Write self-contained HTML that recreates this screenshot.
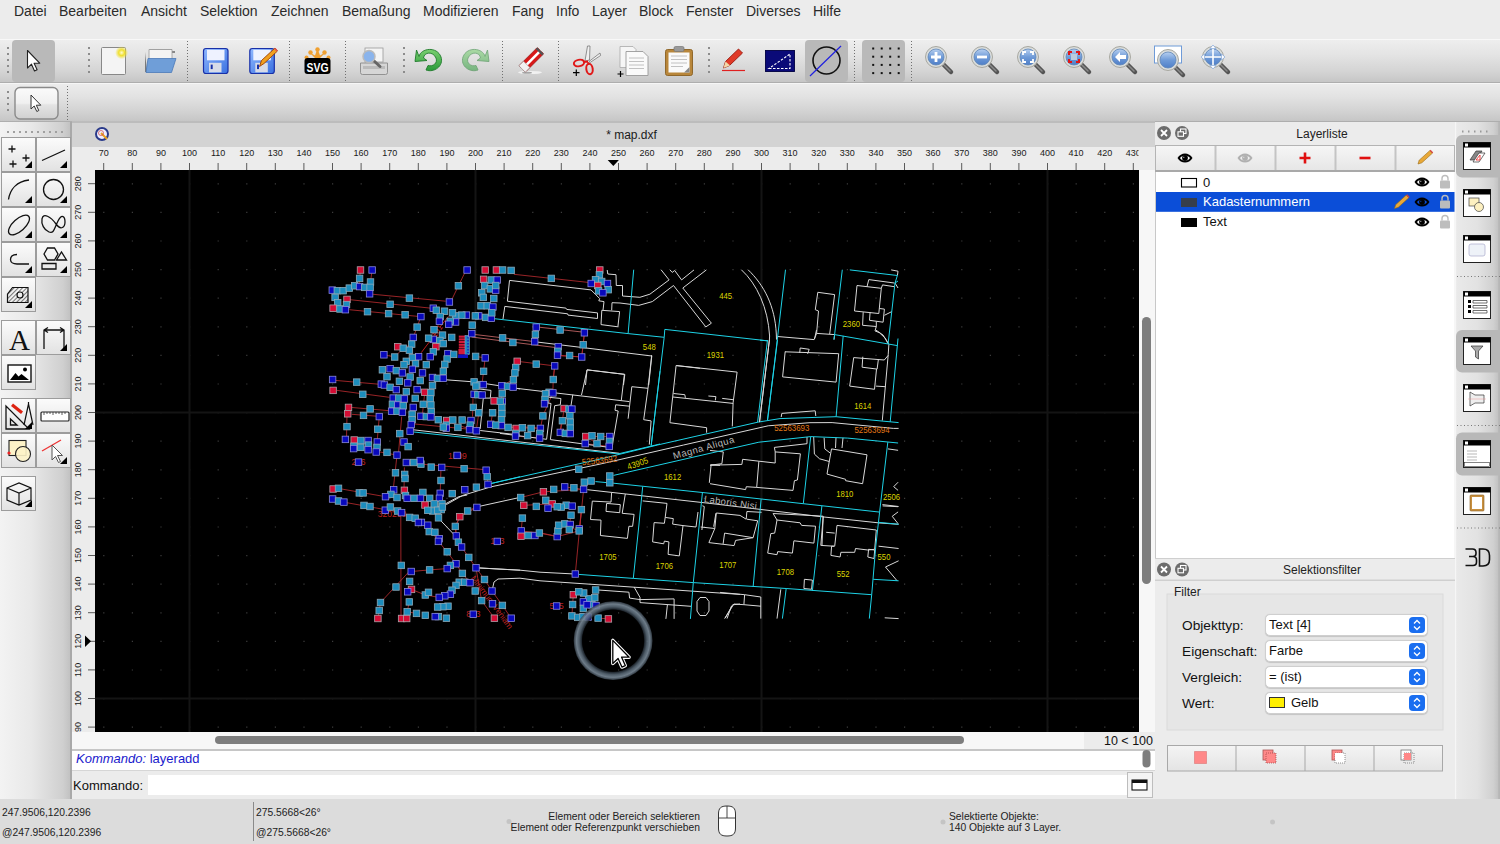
<!DOCTYPE html><html><head><meta charset="utf-8"><style>*{box-sizing:border-box;margin:0;padding:0}
html,body{width:1500px;height:844px;overflow:hidden;background:#ececec;font-family:"Liberation Sans",sans-serif;color:#222}
.a{position:absolute}
svg{position:absolute;overflow:visible}
#menubar{left:0;top:0;width:1500px;height:39px;background:#ececec}
#menubar span{position:absolute;top:3px;font-size:14px;color:#2a2a2a}
#tb1{left:0;top:39px;width:1500px;height:44px;background:linear-gradient(#eeeeee,#e4e4e4 35%,#d4d4d4 75%,#c6c6c6);border-top:1px solid #f8f8f8;border-bottom:1.5px solid #aeaeae}
#tb2{left:0;top:83px;width:1500px;height:39px;background:linear-gradient(#ececec,#e2e2e2 35%,#d2d2d2 75%,#c6c6c6);border-top:1.5px solid #f6f6f6;border-bottom:1.5px solid #aeaeae}
.hd{position:absolute;width:2px;background:repeating-linear-gradient(#8e8e8e 0 2px,transparent 2px 6px)}
.vs{position:absolute;width:1px;background:repeating-linear-gradient(#6c6c6c 0 1px,transparent 1px 3px)}
.selbtn{position:absolute;background:#b9b9b9;border-radius:4px}
#left{left:0;top:122px;width:72px;height:677px;background:linear-gradient(90deg,#f3f3f3 0,#e8e8e8 45%,#cfcfcf 90%,#c2c2c2 100%);border-right:2px solid #a9a9a9}
.tbtn{position:absolute;width:35px;height:35px;background:linear-gradient(#fbfbfb,#efefef 50%,#e2e2e2);border:1px solid #9c9c9c}
.tbtn svg{left:0;top:0}
.tri{position:absolute;right:3px;bottom:3px;width:0;height:0;border-left:7px solid transparent;border-bottom:7px solid #000}
#dtitle{left:72px;top:121px;width:1083px;height:26px;background:#d3d3d3;border-top:2px solid #bcbcbc}
#rulerT{left:72px;top:147px;width:1083px;height:23px;background:#ececec}
#rulerL{left:72px;top:147px;width:23px;height:585px;background:#ececec}
.rl{position:absolute;font-size:9px;color:#1a1a1a;width:30px;text-align:center;line-height:10px}
#canvas{left:95px;top:170px;width:1044px;height:562px;background:#000;overflow:hidden}
#vscroll{left:1139px;top:170px;width:16px;height:562px;background:#f7f7f7}
#hscroll{left:72px;top:732px;width:1083px;height:17px;background:#f7f7f7}
#cmdhist{left:72px;top:749px;width:1083px;height:22px;background:#fff;border-top:2px solid #c6c6c6;border-bottom:1px solid #d6d6d6}
#cmdin{left:72px;top:771px;width:1083px;height:28px;background:#ececec}
#status{left:0;top:799px;width:1500px;height:45px;background:#dcdcdc}
.st{position:absolute;font-size:10.3px;color:#222;white-space:nowrap;line-height:13px}
#rpanel{left:1155px;top:122px;width:300px;height:677px;background:#ececec}
#rdock{left:1455px;top:122px;width:45px;height:677px;background:linear-gradient(90deg,#eaeaea,#e2e2e2 50%,#d0d0d0 85%,#bdbdbd)}
.di{position:absolute;left:8px;width:28px;height:28px;background:#fff;border:1px solid #222;border-top:6px solid #000}
.di:before{content:"";position:absolute;left:1px;top:-5px;width:4px;height:4px;background:#fff}
.di svg{left:0;top:0}
.combo{position:absolute;left:1265px;width:163px;height:22px;background:#fff;border:1px solid #cfcfcf;border-radius:5px;font-size:13px;padding-left:3px;line-height:20px;color:#111;box-shadow:0 0.5px 1px rgba(0,0,0,0.15)}
.combo .arr{position:absolute;right:2px;top:2px;width:16px;height:16px;background:#1a6ef0;border-radius:4px}
.lbl{position:absolute;left:1182px;font-size:13.7px;color:#111;line-height:15px}
.ph{position:absolute;font-size:12px;color:#222}
.circ{position:absolute;width:14px;height:14px;border-radius:50%;background:#6e6e6e}
</style></head><body><div id="menubar" class="a"><span style="left:14px">Datei</span><span style="left:59px">Bearbeiten</span><span style="left:141px">Ansicht</span><span style="left:200px">Selektion</span><span style="left:271px">Zeichnen</span><span style="left:342px">Bemaßung</span><span style="left:423px">Modifizieren</span><span style="left:512px">Fang</span><span style="left:556px">Info</span><span style="left:592px">Layer</span><span style="left:639px">Block</span><span style="left:686px">Fenster</span><span style="left:746px">Diverses</span><span style="left:813px">Hilfe</span></div><div id="tb1" class="a"></div><div id="tb2" class="a"></div><svg style="left:0;top:0" width="1500" height="122"><defs><linearGradient id="lensg" x1="0" y1="0" x2="0" y2="1"><stop offset="0" stop-color="#b8d0f0"/><stop offset="0.5" stop-color="#6f9bd8"/><stop offset="1" stop-color="#4f7fc8"/></linearGradient><linearGradient id="flop" x1="0" y1="0" x2="1" y2="1"><stop offset="0" stop-color="#8fb8ff"/><stop offset="1" stop-color="#3a70e0"/></linearGradient><radialGradient id="glow"><stop offset="0" stop-color="#fffbd0"/><stop offset="0.45" stop-color="#f0e030"/><stop offset="1" stop-color="#f0e030" stop-opacity="0"/></radialGradient><linearGradient id="undog" x1="0" y1="0" x2="0" y2="1"><stop offset="0" stop-color="#7ad070"/><stop offset="1" stop-color="#2a9a3a"/></linearGradient></defs><path d="M8 47v2M8 53v2M8 59v2M8 65v2M8 71v2" stroke="#8c8c8c" stroke-width="2"/><path d="M89 47v2M89 53v2M89 59v2M89 65v2M89 71v2" stroke="#8c8c8c" stroke-width="2"/><path d="M404 47v2M404 53v2M404 59v2M404 65v2M404 71v2" stroke="#8c8c8c" stroke-width="2"/><path d="M709 47v2M709 53v2M709 59v2M709 65v2M709 71v2" stroke="#8c8c8c" stroke-width="2"/><path d="M187.5 41V81" stroke="#707070" stroke-width="1" stroke-dasharray="1 2"/><path d="M289.5 41V81" stroke="#707070" stroke-width="1" stroke-dasharray="1 2"/><path d="M345.5 41V81" stroke="#707070" stroke-width="1" stroke-dasharray="1 2"/><path d="M502.5 41V81" stroke="#707070" stroke-width="1" stroke-dasharray="1 2"/><path d="M558.5 41V81" stroke="#707070" stroke-width="1" stroke-dasharray="1 2"/><path d="M854.5 41V81" stroke="#707070" stroke-width="1" stroke-dasharray="1 2"/><path d="M911.5 41V81" stroke="#707070" stroke-width="1" stroke-dasharray="1 2"/><rect x="12" y="40" width="43" height="42" rx="4" fill="#b9b9b9"/><rect x="805" y="40" width="43" height="42" rx="4" fill="#b9b9b9"/><rect x="862" y="40" width="43" height="42" rx="4" fill="#b9b9b9"/><path d="M27.5 50.5V68l4-3.8 3 6.8 2.6-1.2-3-6.6h5.6z" fill="#fff" stroke="#222" stroke-width="1.1" stroke-linejoin="round"/><rect x="101.5" y="47.5" width="24" height="27" rx="1" fill="#f4f4f4" stroke="#888" stroke-width="1"/><circle cx="121.6" cy="52.7" r="6.5" fill="url(#glow)"/><path d="M145 51h4l1-2h22v4h3v-2H150z" fill="#888"/><path d="M149 49.5h23v11H149z" fill="#f3f3f3" stroke="#999" stroke-width="0.8"/><path d="M145 52v20h2z" fill="#7a7a7a"/><path d="M148 58.5h28l-4.5 14H146z" fill="#6f9ed8" stroke="#4a78b8" stroke-width="0.8"/><rect x="203.5" y="48.5" width="24.5" height="25" rx="2.5" fill="url(#flop)" stroke="#1830a8" stroke-width="1.2"/><rect x="207.0" y="49.8" width="17.5" height="10.5" fill="#eef2ff"/><rect x="209.0" y="62.8" width="12.5" height="9.5" fill="#d8dce8"/><rect x="210.7" y="64.6" width="2" height="4.5" fill="#1830a8"/><rect x="249.8" y="48.5" width="24.5" height="25" rx="2.5" fill="url(#flop)" stroke="#1830a8" stroke-width="1.2"/><rect x="253.3" y="49.8" width="17.5" height="10.5" fill="#eef2ff"/><rect x="255.3" y="62.8" width="12.5" height="9.5" fill="#d8dce8"/><rect x="257.0" y="64.6" width="2" height="4.5" fill="#1830a8"/><path d="M259.5 66.5l2-6 13.5-12.5 2.5 3-13.5 12.5z" fill="#f0a020" stroke="#a04000" stroke-width="0.9"/><path d="M274 48.8l2.5 3 1-1.5-2-2.2z" fill="#e05050"/><path d="M317.5 60.5L309 52l6 3.5 2.5-7 2.5 7 6-3.5z" fill="#f0a030"/><circle cx="310.5" cy="52.5" r="2.2" fill="#f0a030"/><circle cx="317.5" cy="49.5" r="2.2" fill="#f0a030"/><circle cx="324.5" cy="52.5" r="2.2" fill="#f0a030"/><circle cx="306.5" cy="57.5" r="2" fill="#f0a030"/><circle cx="328.5" cy="57.5" r="2" fill="#f0a030"/><rect x="304.5" y="58" width="26" height="16" rx="3" fill="#000"/><text x="317.5" y="71.5" font-family="Liberation Sans" font-weight="bold" font-size="12" text-anchor="middle" fill="#fff" textLength="22" lengthAdjust="spacingAndGlyphs">SVG</text><rect x="365" y="48" width="18" height="14" fill="#f4f4f4" stroke="#999" stroke-width="0.8"/><path d="M360.5 63h27v9.5a2 2 0 0 1-2 2h-23a2 2 0 0 1-2-2z" fill="#d6d6d6" stroke="#8a8a8a" stroke-width="0.9"/><rect x="363" y="66" width="22" height="3" fill="#bbb"/><path d="M373 60l7 6.5" stroke="#666" stroke-width="3" stroke-linecap="round"/><circle cx="369" cy="56.5" r="6" fill="#8ab4ec" stroke="#bbb" stroke-width="1.5"/><path d="M419 56.5 C421 48 437 46 441 57 C444 66 434 73 426 70 L428 65.5 C433 67 438 63 436 58 C433 51 424 52 423.5 58 L427 60.5 L415 61.5 L416.5 50z" fill="url(#undog)" stroke="#1e7a2a" stroke-width="0.9"/><g opacity="0.55" transform="translate(904 0) scale(-1 1)"><path d="M419 56.5 C421 48 437 46 441 57 C444 66 434 73 426 70 L428 65.5 C433 67 438 63 436 58 C433 51 424 52 423.5 58 L427 60.5 L415 61.5 L416.5 50z" fill="url(#undog)" stroke="#1e7a2a" stroke-width="0.9"/></g><ellipse cx="530" cy="72.5" rx="12" ry="1.6" fill="#f4f4f4" opacity="0.9"/><ellipse cx="527" cy="72.8" rx="5" ry="1" fill="#777" opacity="0.6"/><g transform="rotate(-45 531.3 59.8)"><rect x="518.3" y="55.3" width="26" height="9" rx="1" fill="#d81818" stroke="#8a1010" stroke-width="0.6"/><rect x="518.3" y="58.6" width="26" height="2.6" fill="#fff"/><rect x="518.3" y="55.3" width="6.5" height="9" fill="#f2f2f2" stroke="#999" stroke-width="0.6"/><rect x="542" y="55.3" width="2.3" height="9" fill="#555"/></g><path d="M585 61L587.5 46h2.5l-0.5 14z" fill="#f0f0f0" stroke="#777" stroke-width="0.8"/><path d="M589 61.5L600 53l0.6 2.5-10.5 7z" fill="#f0f0f0" stroke="#777" stroke-width="0.8"/><ellipse cx="579" cy="63" rx="5.2" ry="3.2" transform="rotate(-12 579 63)" fill="none" stroke="#e01818" stroke-width="2"/><ellipse cx="589.5" cy="69" rx="3.2" ry="5.2" transform="rotate(-8 589.5 69)" fill="none" stroke="#e01818" stroke-width="2"/><path d="M583.5 62l4.5-0.5M588 62.5l1 2" stroke="#e01818" stroke-width="1.8"/><path d="M573 72.7h6.5M576.3 69.5v6.5" stroke="#000" stroke-width="1.2"/><path d="M620 46.5h13l3 3v18h-16z" fill="#f6f6f6" stroke="#aaa" stroke-width="0.8"/><path d="M626 51.5h17l5 5v19h-22z" fill="#fafafa" stroke="#999" stroke-width="0.9"/><path d="M629 58h15M629 61.5h15M629 65h15M629 68.5h15" stroke="#bbb" stroke-width="0.9"/><path d="M617.5 74h6M620.5 71v6" stroke="#000" stroke-width="1.2"/><rect x="665.5" y="49.5" width="27" height="26" rx="2" fill="#b8863a" stroke="#8a6020" stroke-width="0.9"/><rect x="668.5" y="52.5" width="21" height="20" fill="#fafafa"/><path d="M671 56h16M671 59.5h16M671 63h16M671 66.5h12" stroke="#bbb" stroke-width="0.9"/><rect x="674" y="46.5" width="10" height="5" rx="1.5" fill="#999" stroke="#777" stroke-width="0.7"/><path d="M684 72.5l5.5-5.5v5.5z" fill="#888"/><path d="M722 70.5H745" stroke="#e02020" stroke-width="1.2"/><path d="M723.5 68l2-6.5 13-12.5 4 4-13 12.5z" fill="#e03a28" stroke="#9a1a10" stroke-width="0.9"/><path d="M723.5 68l2-6.5 4.5 4z" fill="#f2d9a8"/><rect x="765.5" y="50.5" width="29" height="21" fill="#0a0a78" stroke="#000040" stroke-width="0.9"/><path d="M769 68.5H790V54Z" fill="none" stroke="#fff" stroke-width="1.1" stroke-dasharray="2.5 1.5"/><circle cx="826.5" cy="60.5" r="13.5" fill="none" stroke="#111" stroke-width="1.6"/><path d="M810 76L841 46" stroke="#2020e0" stroke-width="1.2"/><rect x="872.2" y="47.5" width="2" height="2" fill="#111"/><rect x="872.2" y="55.7" width="2" height="2" fill="#111"/><rect x="872.2" y="63.9" width="2" height="2" fill="#111"/><rect x="872.2" y="72.1" width="2" height="2" fill="#111"/><rect x="880.7" y="47.5" width="2" height="2" fill="#111"/><rect x="880.7" y="55.7" width="2" height="2" fill="#111"/><rect x="880.7" y="63.9" width="2" height="2" fill="#111"/><rect x="880.7" y="72.1" width="2" height="2" fill="#111"/><rect x="889.2" y="47.5" width="2" height="2" fill="#111"/><rect x="889.2" y="55.7" width="2" height="2" fill="#111"/><rect x="889.2" y="63.9" width="2" height="2" fill="#111"/><rect x="889.2" y="72.1" width="2" height="2" fill="#111"/><rect x="897.7" y="47.5" width="2" height="2" fill="#111"/><rect x="897.7" y="55.7" width="2" height="2" fill="#111"/><rect x="897.7" y="63.9" width="2" height="2" fill="#111"/><rect x="897.7" y="72.1" width="2" height="2" fill="#111"/><path d="M942 63L951 72" stroke="#555" stroke-width="4.5" stroke-linecap="round"/><path d="M943 64L950 71" stroke="#8a8a8a" stroke-width="1.5" stroke-linecap="round"/><circle cx="936" cy="57" r="10.5" fill="#d9dcdc" stroke="#a8a8a0" stroke-width="1"/><circle cx="936" cy="57" r="8" fill="url(#lensg)" stroke="#5f86b8" stroke-width="0.8"/><path d="M936 52v10M931 57h10" stroke="#fff" stroke-width="2.8"/><path d="M988 63L997 72" stroke="#555" stroke-width="4.5" stroke-linecap="round"/><path d="M989 64L996 71" stroke="#8a8a8a" stroke-width="1.5" stroke-linecap="round"/><circle cx="982" cy="57" r="10.5" fill="#d9dcdc" stroke="#a8a8a0" stroke-width="1"/><circle cx="982" cy="57" r="8" fill="url(#lensg)" stroke="#5f86b8" stroke-width="0.8"/><path d="M977 57h10" stroke="#fff" stroke-width="2.8"/><path d="M1034 63L1043 72" stroke="#555" stroke-width="4.5" stroke-linecap="round"/><path d="M1035 64L1042 71" stroke="#8a8a8a" stroke-width="1.5" stroke-linecap="round"/><circle cx="1028" cy="57" r="10.5" fill="#d9dcdc" stroke="#a8a8a0" stroke-width="1"/><circle cx="1028" cy="57" r="8" fill="url(#lensg)" stroke="#5f86b8" stroke-width="0.8"/><path d="M1023 55v-3h3M1030 52h3v3M1033 59v3h-3M1026 62h-3v-3" stroke="#fff" stroke-width="1.8" fill="none"/><path d="M1080 63L1089 72" stroke="#555" stroke-width="4.5" stroke-linecap="round"/><path d="M1081 64L1088 71" stroke="#8a8a8a" stroke-width="1.5" stroke-linecap="round"/><circle cx="1074" cy="57" r="10.5" fill="#d9dcdc" stroke="#a8a8a0" stroke-width="1"/><circle cx="1074" cy="57" r="8" fill="url(#lensg)" stroke="#5f86b8" stroke-width="0.8"/><rect x="1071" y="54" width="6" height="6" fill="#bcd"/><path d="M1069 55v-3h3M1076 52h3v3M1079 59v3h-3M1072 62h-3v-3" stroke="#e01818" stroke-width="2" fill="none"/><path d="M1126 63L1135 72" stroke="#555" stroke-width="4.5" stroke-linecap="round"/><path d="M1127 64L1134 71" stroke="#8a8a8a" stroke-width="1.5" stroke-linecap="round"/><circle cx="1120" cy="57" r="10.5" fill="#d9dcdc" stroke="#a8a8a0" stroke-width="1"/><circle cx="1120" cy="57" r="8" fill="url(#lensg)" stroke="#5f86b8" stroke-width="0.8"/><path d="M1115 57l5-5v3h6v4h-6v3z" fill="#fff"/><rect x="1154.5" y="46" width="27" height="17" fill="#fff" stroke="#6f9bd8" stroke-width="1"/><path d="M1174 66L1183 75" stroke="#555" stroke-width="4.5" stroke-linecap="round"/><path d="M1175 67L1182 74" stroke="#8a8a8a" stroke-width="1.5" stroke-linecap="round"/><circle cx="1168" cy="60" r="10.5" fill="#d9dcdc" stroke="#a8a8a0" stroke-width="1"/><circle cx="1168" cy="60" r="8" fill="url(#lensg)" stroke="#5f86b8" stroke-width="0.8"/><path d="M1219 63L1228 72" stroke="#555" stroke-width="4.5" stroke-linecap="round"/><path d="M1220 64L1227 71" stroke="#8a8a8a" stroke-width="1.5" stroke-linecap="round"/><circle cx="1213" cy="57" r="10.5" fill="#d9dcdc" stroke="#a8a8a0" stroke-width="1"/><circle cx="1213" cy="57" r="8" fill="url(#lensg)" stroke="#5f86b8" stroke-width="0.8"/><path d="M1213 47v20M1203 57h20" stroke="#fff" stroke-width="1.6"/><path d="M1213 45l-3 3.5h6zM1213 69l-3-3.5h6zM1201 57l3.5-3v6zM1225 57l-3.5-3v6z" fill="#fff" stroke="#6f9bd8" stroke-width="0.6"/><path d="M8 91v2M8 97v2M8 103v2M8 109v2" stroke="#8c8c8c" stroke-width="2"/><path d="M67.5 86V120" stroke="#707070" stroke-width="1" stroke-dasharray="1 2"/><defs><linearGradient id="b2g" x1="0" y1="0" x2="0" y2="1"><stop offset="0" stop-color="#fbfbfb"/><stop offset="0.5" stop-color="#f0f0f0"/><stop offset="0.55" stop-color="#e4e4e4"/><stop offset="1" stop-color="#d0d0d0"/></linearGradient></defs><rect x="15" y="87.5" width="43" height="31.5" rx="5" fill="url(#b2g)" stroke="#8a8a8a" stroke-width="1.4"/><path d="M31 95V109l3.2-3 2.6 5.5 2-1-2.5-5.3h4.5z" fill="#fff" stroke="#333" stroke-width="1" stroke-linejoin="round"/></svg><div id="left" class="a"></div><div class="a" style="left:7px;top:131px;width:57px;height:2px;background:repeating-linear-gradient(90deg,#a0a0a0 0 2px,transparent 2px 6px)"></div><div class="tbtn" style="left:1px;top:137px"><svg width="35" height="35" viewBox="0 0 35 35"><path d="M6.5 11h7M10 7.5v7M20.5 20h7M24 16.5v7M7.5 26h7M11 22.5v7" fill="none" stroke="#111" stroke-width="1.3"/></svg><div class="tri"></div></div><div class="tbtn" style="left:36px;top:137px"><svg width="35" height="35" viewBox="0 0 35 35"><path d="M5 22.5L28 12" fill="none" stroke="#111" stroke-width="1.3"/></svg><div class="tri"></div></div><div class="tbtn" style="left:1px;top:172px"><svg width="35" height="35" viewBox="0 0 35 35"><path d="M6.5 26.5C8 16 15 8.5 27 7" fill="none" stroke="#111" stroke-width="1.3"/></svg><div class="tri"></div></div><div class="tbtn" style="left:36px;top:172px"><svg width="35" height="35" viewBox="0 0 35 35"><circle cx="16.5" cy="16.5" r="10" fill="none" stroke="#111" stroke-width="1.3"/></svg><div class="tri"></div></div><div class="tbtn" style="left:1px;top:207px"><svg width="35" height="35" viewBox="0 0 35 35"><ellipse cx="17" cy="17" rx="13" ry="6" transform="rotate(-42 17 17)" fill="none" stroke="#111" stroke-width="1.3"/></svg><div class="tri"></div></div><div class="tbtn" style="left:36px;top:207px"><svg width="35" height="35" viewBox="0 0 35 35"><path d="M5 11C6 4 14 9 19 16S28 19 28 14 25 5 21 13 17 26 12 24 4 16 5 11z" fill="none" stroke="#111" stroke-width="1.3"/></svg><div class="tri"></div></div><div class="tbtn" style="left:1px;top:242px"><svg width="35" height="35" viewBox="0 0 35 35"><path d="M15 11.5C10 11.5 8.5 14 8.5 16.5S11 21 15 21H27" fill="none" stroke="#111" stroke-width="1.3"/></svg><div class="tri"></div></div><div class="tbtn" style="left:36px;top:242px"><svg width="35" height="35" viewBox="0 0 35 35"><path d="M7 11L10.5 5H17.5L21 11L17.5 17H10.5Z M19.5 17L24.5 9L29.5 17Z M5 20.5H19V26H5Z" fill="none" stroke="#111" stroke-width="1.3" stroke-width="1.1"/></svg><div class="tri"></div></div><div class="tbtn" style="left:1px;top:277px"><svg width="35" height="35" viewBox="0 0 35 35"><defs><pattern id="hp" width="3" height="3" patternUnits="userSpaceOnUse" patternTransform="rotate(45)"><rect width="1" height="3" fill="#777"/></pattern></defs><path d="M5.5 16L10.5 9.5H26V24.5H5.5Z" fill="url(#hp)" stroke="#111" stroke-width="1.2"/><circle cx="18" cy="17" r="3" fill="#eee" stroke="#111" stroke-width="1.2"/></svg><div class="tri"></div></div><div class="tbtn" style="left:1px;top:320px"><svg width="35" height="35" viewBox="0 0 35 35"><text x="17.5" y="29" font-family="Liberation Serif" font-size="29" text-anchor="middle" fill="#111">A</text></svg></div><div class="tbtn" style="left:36px;top:320px"><svg width="35" height="35" viewBox="0 0 35 35"><path d="M7 28V8.5M27 28V8.5M7 9H27M7 9l4-2.5M7 9l4 2.5M27 9l-4-2.5M27 9l-4 2.5" fill="none" stroke="#111" stroke-width="1.3" stroke-width="1.5"/></svg><div class="tri"></div></div><div class="tbtn" style="left:1px;top:355px"><svg width="35" height="35" viewBox="0 0 35 35"><rect x="6" y="9" width="23" height="17" fill="#fff" stroke="#111" stroke-width="1.4"/><path d="M8 24l5.5-7 3 3.5 3-2.5L27 24Z" fill="#000"/><circle cx="23" cy="13.5" r="2" fill="#000"/></svg></div><div class="tbtn" style="left:1px;top:398px"><svg width="35" height="35" viewBox="0 0 35 35"><path d="M4 7V30H27Z M8.5 20V26H15Z" fill="none" stroke="#111" stroke-width="1.3"/><path d="M9 7l10 8 2-2.5-10-8z" fill="#d21"/><path d="M26.5 5L22 26M26.5 5L31 26M26.5 3v3" stroke="#111" stroke-width="1.2" fill="none"/></svg><div class="tri"></div></div><div class="tbtn" style="left:36px;top:398px"><svg width="35" height="35" viewBox="0 0 35 35"><rect x="4" y="13" width="28" height="9" rx="1" fill="#fff" stroke="#222" stroke-width="1.2"/><path d="M7 13v3M10 13v2M13 13v2M16 13v3M19 13v2M22 13v2M25 13v3M28 13v2" stroke="#333" stroke-width="0.8"/></svg></div><div class="tbtn" style="left:1px;top:433px"><svg width="35" height="35" viewBox="0 0 35 35"><rect x="7" y="6.5" width="17" height="15" fill="#fdf3c8" stroke="#222" stroke-width="1.1"/><circle cx="21" cy="20" r="7.5" fill="#fdf3c8" fill-opacity="0.9" stroke="#222" stroke-width="1.1"/><circle cx="7" cy="19" r="1.6" fill="#e22"/></svg></div><div class="tbtn" style="left:36px;top:433px"><svg width="35" height="35" viewBox="0 0 35 35"><path d="M5 17L24 6" stroke="#e33" stroke-width="1.3"/><path d="M15 11v15l3.5-3.5 3 6 2-1-3-6h5z" fill="#fff" stroke="#555" stroke-width="1"/></svg><div class="tri"></div></div><div class="tbtn" style="left:1px;top:476px"><svg width="35" height="35" viewBox="0 0 35 35"><path d="M5 11L17 6L29 11V23L17 28L5 23Z M5 11L17 16L29 11 M17 16V28" fill="none" stroke="#111" stroke-width="1.2"/></svg><div class="tri"></div></div><div id="dtitle" class="a"></div><div id="rulerT" class="a"></div><div id="rulerL" class="a"></div><div id="vscroll" class="a"></div><div id="hscroll" class="a"></div><div id="cmdhist" class="a"></div><div id="cmdin" class="a"></div><svg style="left:0;top:0" width="1500" height="844"><defs><radialGradient id="ring" cx="0.5" cy="0.5" r="0.5"><stop offset="0.78" stop-color="#000" stop-opacity="0"/><stop offset="0.8" stop-color="#2a3540"/><stop offset="0.9" stop-color="#6c7c8a"/><stop offset="1" stop-color="#2a3540"/></radialGradient></defs><circle cx="102" cy="134" r="6" fill="#eef" stroke="#2a3a8a" stroke-width="2"/><path d="M101 133l6 6" stroke="#e8a020" stroke-width="2"/><circle cx="101" cy="133" r="2.5" fill="none" stroke="#c44" stroke-width="0.7"/><text x="631.5" y="139" font-family="Liberation Sans" font-size="12" text-anchor="middle" fill="#1a1a1a">* map.dxf</text><text x="103.7" y="156" font-family="Liberation Sans" font-size="9" text-anchor="middle" fill="#1a1a1a">70</text><text x="132.3" y="156" font-family="Liberation Sans" font-size="9" text-anchor="middle" fill="#1a1a1a">80</text><text x="160.9" y="156" font-family="Liberation Sans" font-size="9" text-anchor="middle" fill="#1a1a1a">90</text><text x="189.5" y="156" font-family="Liberation Sans" font-size="9" text-anchor="middle" fill="#1a1a1a">100</text><text x="218.1" y="156" font-family="Liberation Sans" font-size="9" text-anchor="middle" fill="#1a1a1a">110</text><text x="246.7" y="156" font-family="Liberation Sans" font-size="9" text-anchor="middle" fill="#1a1a1a">120</text><text x="275.3" y="156" font-family="Liberation Sans" font-size="9" text-anchor="middle" fill="#1a1a1a">130</text><text x="303.9" y="156" font-family="Liberation Sans" font-size="9" text-anchor="middle" fill="#1a1a1a">140</text><text x="332.5" y="156" font-family="Liberation Sans" font-size="9" text-anchor="middle" fill="#1a1a1a">150</text><text x="361.1" y="156" font-family="Liberation Sans" font-size="9" text-anchor="middle" fill="#1a1a1a">160</text><text x="389.7" y="156" font-family="Liberation Sans" font-size="9" text-anchor="middle" fill="#1a1a1a">170</text><text x="418.3" y="156" font-family="Liberation Sans" font-size="9" text-anchor="middle" fill="#1a1a1a">180</text><text x="446.9" y="156" font-family="Liberation Sans" font-size="9" text-anchor="middle" fill="#1a1a1a">190</text><text x="475.5" y="156" font-family="Liberation Sans" font-size="9" text-anchor="middle" fill="#1a1a1a">200</text><text x="504.1" y="156" font-family="Liberation Sans" font-size="9" text-anchor="middle" fill="#1a1a1a">210</text><text x="532.7" y="156" font-family="Liberation Sans" font-size="9" text-anchor="middle" fill="#1a1a1a">220</text><text x="561.3" y="156" font-family="Liberation Sans" font-size="9" text-anchor="middle" fill="#1a1a1a">230</text><text x="589.9" y="156" font-family="Liberation Sans" font-size="9" text-anchor="middle" fill="#1a1a1a">240</text><text x="618.5" y="156" font-family="Liberation Sans" font-size="9" text-anchor="middle" fill="#1a1a1a">250</text><text x="647.1" y="156" font-family="Liberation Sans" font-size="9" text-anchor="middle" fill="#1a1a1a">260</text><text x="675.7" y="156" font-family="Liberation Sans" font-size="9" text-anchor="middle" fill="#1a1a1a">270</text><text x="704.3" y="156" font-family="Liberation Sans" font-size="9" text-anchor="middle" fill="#1a1a1a">280</text><text x="732.9" y="156" font-family="Liberation Sans" font-size="9" text-anchor="middle" fill="#1a1a1a">290</text><text x="761.5" y="156" font-family="Liberation Sans" font-size="9" text-anchor="middle" fill="#1a1a1a">300</text><text x="790.1" y="156" font-family="Liberation Sans" font-size="9" text-anchor="middle" fill="#1a1a1a">310</text><text x="818.7" y="156" font-family="Liberation Sans" font-size="9" text-anchor="middle" fill="#1a1a1a">320</text><text x="847.3" y="156" font-family="Liberation Sans" font-size="9" text-anchor="middle" fill="#1a1a1a">330</text><text x="875.9" y="156" font-family="Liberation Sans" font-size="9" text-anchor="middle" fill="#1a1a1a">340</text><text x="904.5" y="156" font-family="Liberation Sans" font-size="9" text-anchor="middle" fill="#1a1a1a">350</text><text x="933.1" y="156" font-family="Liberation Sans" font-size="9" text-anchor="middle" fill="#1a1a1a">360</text><text x="961.7" y="156" font-family="Liberation Sans" font-size="9" text-anchor="middle" fill="#1a1a1a">370</text><text x="990.3" y="156" font-family="Liberation Sans" font-size="9" text-anchor="middle" fill="#1a1a1a">380</text><text x="1018.9" y="156" font-family="Liberation Sans" font-size="9" text-anchor="middle" fill="#1a1a1a">390</text><text x="1047.5" y="156" font-family="Liberation Sans" font-size="9" text-anchor="middle" fill="#1a1a1a">400</text><text x="1076.1" y="156" font-family="Liberation Sans" font-size="9" text-anchor="middle" fill="#1a1a1a">410</text><text x="1104.7" y="156" font-family="Liberation Sans" font-size="9" text-anchor="middle" fill="#1a1a1a">420</text><text x="1133.3" y="156" font-family="Liberation Sans" font-size="9" text-anchor="middle" fill="#1a1a1a" clip-path="url(#c430)">430</text><text transform="translate(80.8 727.1) rotate(-90)" x="0" y="0" font-family="Liberation Sans" font-size="9" text-anchor="middle" fill="#1a1a1a">90</text><text transform="translate(80.8 698.5) rotate(-90)" x="0" y="0" font-family="Liberation Sans" font-size="9" text-anchor="middle" fill="#1a1a1a">100</text><text transform="translate(80.8 669.9) rotate(-90)" x="0" y="0" font-family="Liberation Sans" font-size="9" text-anchor="middle" fill="#1a1a1a">110</text><text transform="translate(80.8 641.3) rotate(-90)" x="0" y="0" font-family="Liberation Sans" font-size="9" text-anchor="middle" fill="#1a1a1a">120</text><text transform="translate(80.8 612.7) rotate(-90)" x="0" y="0" font-family="Liberation Sans" font-size="9" text-anchor="middle" fill="#1a1a1a">130</text><text transform="translate(80.8 584.1) rotate(-90)" x="0" y="0" font-family="Liberation Sans" font-size="9" text-anchor="middle" fill="#1a1a1a">140</text><text transform="translate(80.8 555.5) rotate(-90)" x="0" y="0" font-family="Liberation Sans" font-size="9" text-anchor="middle" fill="#1a1a1a">150</text><text transform="translate(80.8 526.9) rotate(-90)" x="0" y="0" font-family="Liberation Sans" font-size="9" text-anchor="middle" fill="#1a1a1a">160</text><text transform="translate(80.8 498.3) rotate(-90)" x="0" y="0" font-family="Liberation Sans" font-size="9" text-anchor="middle" fill="#1a1a1a">170</text><text transform="translate(80.8 469.7) rotate(-90)" x="0" y="0" font-family="Liberation Sans" font-size="9" text-anchor="middle" fill="#1a1a1a">180</text><text transform="translate(80.8 441.1) rotate(-90)" x="0" y="0" font-family="Liberation Sans" font-size="9" text-anchor="middle" fill="#1a1a1a">190</text><text transform="translate(80.8 412.5) rotate(-90)" x="0" y="0" font-family="Liberation Sans" font-size="9" text-anchor="middle" fill="#1a1a1a">200</text><text transform="translate(80.8 383.9) rotate(-90)" x="0" y="0" font-family="Liberation Sans" font-size="9" text-anchor="middle" fill="#1a1a1a">210</text><text transform="translate(80.8 355.3) rotate(-90)" x="0" y="0" font-family="Liberation Sans" font-size="9" text-anchor="middle" fill="#1a1a1a">220</text><text transform="translate(80.8 326.7) rotate(-90)" x="0" y="0" font-family="Liberation Sans" font-size="9" text-anchor="middle" fill="#1a1a1a">230</text><text transform="translate(80.8 298.1) rotate(-90)" x="0" y="0" font-family="Liberation Sans" font-size="9" text-anchor="middle" fill="#1a1a1a">240</text><text transform="translate(80.8 269.5) rotate(-90)" x="0" y="0" font-family="Liberation Sans" font-size="9" text-anchor="middle" fill="#1a1a1a">250</text><text transform="translate(80.8 240.9) rotate(-90)" x="0" y="0" font-family="Liberation Sans" font-size="9" text-anchor="middle" fill="#1a1a1a">260</text><text transform="translate(80.8 212.3) rotate(-90)" x="0" y="0" font-family="Liberation Sans" font-size="9" text-anchor="middle" fill="#1a1a1a">270</text><text transform="translate(80.8 183.7) rotate(-90)" x="0" y="0" font-family="Liberation Sans" font-size="9" text-anchor="middle" fill="#1a1a1a">280</text><path d="M103.7 163V170M132.3 163V170M160.9 163V170M189.5 163V170M218.1 163V170M246.7 163V170M275.3 163V170M303.9 163V170M332.5 163V170M361.1 163V170M389.7 163V170M418.3 163V170M446.9 163V170M475.5 163V170M504.1 163V170M532.7 163V170M561.3 163V170M589.9 163V170M618.5 163V170M647.1 163V170M675.7 163V170M704.3 163V170M732.9 163V170M761.5 163V170M790.1 163V170M818.7 163V170M847.3 163V170M875.9 163V170M904.5 163V170M933.1 163V170M961.7 163V170M990.3 163V170M1018.9 163V170M1047.5 163V170M1076.1 163V170M1104.7 163V170M1133.3 163V170M88 727.1H95M88 698.5H95M88 669.9H95M88 641.3H95M88 612.7H95M88 584.1H95M88 555.5H95M88 526.9H95M88 498.3H95M88 469.7H95M88 441.1H95M88 412.5H95M88 383.9H95M88 355.3H95M88 326.7H95M88 298.1H95M88 269.5H95M88 240.9H95M88 212.3H95M88 183.7H95" stroke="#5a5a5a" stroke-width="1"/><defs><clipPath id="c430"><rect x="1100" y="140" width="38.5" height="20"/></clipPath></defs><path d="M607.7 160H618.9L613.3 166z" fill="#000"/><path d="M85 635.5V647L91 641.2z" fill="#000"/><rect x="1142" y="317" width="9" height="267" rx="4.5" fill="#7d7d7d"/><rect x="215" y="736" width="749" height="8" rx="4" fill="#7d7d7d"/><rect x="1084" y="732" width="71" height="17" fill="#ececec"/><text x="1153" y="745" font-family="Liberation Sans" font-size="12.5" text-anchor="end" fill="#111">10 &lt; 100</text><text x="76" y="762.5" font-family="Liberation Sans" font-size="13" fill="#1a1acc"><tspan font-style="italic">Kommando:</tspan> layeradd</text><rect x="1142.5" y="750" width="8" height="17.5" rx="4" fill="#7d7d7d"/><text x="73" y="789.5" font-family="Liberation Sans" font-size="13" fill="#111">Kommando:</text><rect x="148" y="775" width="979" height="20" fill="#fff"/><rect x="1127.5" y="772.5" width="25" height="25" fill="#f4f4f4" stroke="#bdbdbd" stroke-width="1"/><rect x="1132" y="780" width="15" height="10" fill="#fff" stroke="#111" stroke-width="1.1"/><rect x="1132" y="780" width="15" height="3" fill="#111"/></svg><div id="canvas" class="a"><svg style="left:-95px;top:-170px" width="1500" height="844"><defs><radialGradient id="ring2" cx="0.5" cy="0.5" r="0.5"><stop offset="0.77" stop-color="#000" stop-opacity="0"/><stop offset="0.8" stop-color="#28323c" stop-opacity="0.8"/><stop offset="0.86" stop-color="#5a6a78" stop-opacity="0.85"/><stop offset="0.93" stop-color="#7a8a98" stop-opacity="0.9"/><stop offset="1" stop-color="#3a4550" stop-opacity="0.8"/></radialGradient></defs><path d="M103.2 726.6h1.2v1.2h-1.2zM103.2 698.0h1.2v1.2h-1.2zM103.2 669.4h1.2v1.2h-1.2zM103.2 640.8h1.2v1.2h-1.2zM103.2 612.2h1.2v1.2h-1.2zM103.2 583.6h1.2v1.2h-1.2zM103.2 555.0h1.2v1.2h-1.2zM103.2 526.4h1.2v1.2h-1.2zM103.2 497.8h1.2v1.2h-1.2zM103.2 469.2h1.2v1.2h-1.2zM103.2 440.6h1.2v1.2h-1.2zM103.2 412.0h1.2v1.2h-1.2zM103.2 383.4h1.2v1.2h-1.2zM103.2 354.8h1.2v1.2h-1.2zM103.2 326.2h1.2v1.2h-1.2zM103.2 297.6h1.2v1.2h-1.2zM103.2 269.0h1.2v1.2h-1.2zM103.2 240.4h1.2v1.2h-1.2zM103.2 211.8h1.2v1.2h-1.2zM103.2 183.2h1.2v1.2h-1.2zM131.8 726.6h1.2v1.2h-1.2zM131.8 698.0h1.2v1.2h-1.2zM131.8 669.4h1.2v1.2h-1.2zM131.8 640.8h1.2v1.2h-1.2zM131.8 612.2h1.2v1.2h-1.2zM131.8 583.6h1.2v1.2h-1.2zM131.8 555.0h1.2v1.2h-1.2zM131.8 526.4h1.2v1.2h-1.2zM131.8 497.8h1.2v1.2h-1.2zM131.8 469.2h1.2v1.2h-1.2zM131.8 440.6h1.2v1.2h-1.2zM131.8 412.0h1.2v1.2h-1.2zM131.8 383.4h1.2v1.2h-1.2zM131.8 354.8h1.2v1.2h-1.2zM131.8 326.2h1.2v1.2h-1.2zM131.8 297.6h1.2v1.2h-1.2zM131.8 269.0h1.2v1.2h-1.2zM131.8 240.4h1.2v1.2h-1.2zM131.8 211.8h1.2v1.2h-1.2zM131.8 183.2h1.2v1.2h-1.2zM160.4 726.6h1.2v1.2h-1.2zM160.4 698.0h1.2v1.2h-1.2zM160.4 669.4h1.2v1.2h-1.2zM160.4 640.8h1.2v1.2h-1.2zM160.4 612.2h1.2v1.2h-1.2zM160.4 583.6h1.2v1.2h-1.2zM160.4 555.0h1.2v1.2h-1.2zM160.4 526.4h1.2v1.2h-1.2zM160.4 497.8h1.2v1.2h-1.2zM160.4 469.2h1.2v1.2h-1.2zM160.4 440.6h1.2v1.2h-1.2zM160.4 412.0h1.2v1.2h-1.2zM160.4 383.4h1.2v1.2h-1.2zM160.4 354.8h1.2v1.2h-1.2zM160.4 326.2h1.2v1.2h-1.2zM160.4 297.6h1.2v1.2h-1.2zM160.4 269.0h1.2v1.2h-1.2zM160.4 240.4h1.2v1.2h-1.2zM160.4 211.8h1.2v1.2h-1.2zM160.4 183.2h1.2v1.2h-1.2zM189.0 726.6h1.2v1.2h-1.2zM189.0 698.0h1.2v1.2h-1.2zM189.0 669.4h1.2v1.2h-1.2zM189.0 640.8h1.2v1.2h-1.2zM189.0 612.2h1.2v1.2h-1.2zM189.0 583.6h1.2v1.2h-1.2zM189.0 555.0h1.2v1.2h-1.2zM189.0 526.4h1.2v1.2h-1.2zM189.0 497.8h1.2v1.2h-1.2zM189.0 469.2h1.2v1.2h-1.2zM189.0 440.6h1.2v1.2h-1.2zM189.0 412.0h1.2v1.2h-1.2zM189.0 383.4h1.2v1.2h-1.2zM189.0 354.8h1.2v1.2h-1.2zM189.0 326.2h1.2v1.2h-1.2zM189.0 297.6h1.2v1.2h-1.2zM189.0 269.0h1.2v1.2h-1.2zM189.0 240.4h1.2v1.2h-1.2zM189.0 211.8h1.2v1.2h-1.2zM189.0 183.2h1.2v1.2h-1.2zM217.6 726.6h1.2v1.2h-1.2zM217.6 698.0h1.2v1.2h-1.2zM217.6 669.4h1.2v1.2h-1.2zM217.6 640.8h1.2v1.2h-1.2zM217.6 612.2h1.2v1.2h-1.2zM217.6 583.6h1.2v1.2h-1.2zM217.6 555.0h1.2v1.2h-1.2zM217.6 526.4h1.2v1.2h-1.2zM217.6 497.8h1.2v1.2h-1.2zM217.6 469.2h1.2v1.2h-1.2zM217.6 440.6h1.2v1.2h-1.2zM217.6 412.0h1.2v1.2h-1.2zM217.6 383.4h1.2v1.2h-1.2zM217.6 354.8h1.2v1.2h-1.2zM217.6 326.2h1.2v1.2h-1.2zM217.6 297.6h1.2v1.2h-1.2zM217.6 269.0h1.2v1.2h-1.2zM217.6 240.4h1.2v1.2h-1.2zM217.6 211.8h1.2v1.2h-1.2zM217.6 183.2h1.2v1.2h-1.2zM246.2 726.6h1.2v1.2h-1.2zM246.2 698.0h1.2v1.2h-1.2zM246.2 669.4h1.2v1.2h-1.2zM246.2 640.8h1.2v1.2h-1.2zM246.2 612.2h1.2v1.2h-1.2zM246.2 583.6h1.2v1.2h-1.2zM246.2 555.0h1.2v1.2h-1.2zM246.2 526.4h1.2v1.2h-1.2zM246.2 497.8h1.2v1.2h-1.2zM246.2 469.2h1.2v1.2h-1.2zM246.2 440.6h1.2v1.2h-1.2zM246.2 412.0h1.2v1.2h-1.2zM246.2 383.4h1.2v1.2h-1.2zM246.2 354.8h1.2v1.2h-1.2zM246.2 326.2h1.2v1.2h-1.2zM246.2 297.6h1.2v1.2h-1.2zM246.2 269.0h1.2v1.2h-1.2zM246.2 240.4h1.2v1.2h-1.2zM246.2 211.8h1.2v1.2h-1.2zM246.2 183.2h1.2v1.2h-1.2zM274.8 726.6h1.2v1.2h-1.2zM274.8 698.0h1.2v1.2h-1.2zM274.8 669.4h1.2v1.2h-1.2zM274.8 640.8h1.2v1.2h-1.2zM274.8 612.2h1.2v1.2h-1.2zM274.8 583.6h1.2v1.2h-1.2zM274.8 555.0h1.2v1.2h-1.2zM274.8 526.4h1.2v1.2h-1.2zM274.8 497.8h1.2v1.2h-1.2zM274.8 469.2h1.2v1.2h-1.2zM274.8 440.6h1.2v1.2h-1.2zM274.8 412.0h1.2v1.2h-1.2zM274.8 383.4h1.2v1.2h-1.2zM274.8 354.8h1.2v1.2h-1.2zM274.8 326.2h1.2v1.2h-1.2zM274.8 297.6h1.2v1.2h-1.2zM274.8 269.0h1.2v1.2h-1.2zM274.8 240.4h1.2v1.2h-1.2zM274.8 211.8h1.2v1.2h-1.2zM274.8 183.2h1.2v1.2h-1.2zM303.4 726.6h1.2v1.2h-1.2zM303.4 698.0h1.2v1.2h-1.2zM303.4 669.4h1.2v1.2h-1.2zM303.4 640.8h1.2v1.2h-1.2zM303.4 612.2h1.2v1.2h-1.2zM303.4 583.6h1.2v1.2h-1.2zM303.4 555.0h1.2v1.2h-1.2zM303.4 526.4h1.2v1.2h-1.2zM303.4 497.8h1.2v1.2h-1.2zM303.4 469.2h1.2v1.2h-1.2zM303.4 440.6h1.2v1.2h-1.2zM303.4 412.0h1.2v1.2h-1.2zM303.4 383.4h1.2v1.2h-1.2zM303.4 354.8h1.2v1.2h-1.2zM303.4 326.2h1.2v1.2h-1.2zM303.4 297.6h1.2v1.2h-1.2zM303.4 269.0h1.2v1.2h-1.2zM303.4 240.4h1.2v1.2h-1.2zM303.4 211.8h1.2v1.2h-1.2zM303.4 183.2h1.2v1.2h-1.2zM332.0 726.6h1.2v1.2h-1.2zM332.0 698.0h1.2v1.2h-1.2zM332.0 669.4h1.2v1.2h-1.2zM332.0 640.8h1.2v1.2h-1.2zM332.0 612.2h1.2v1.2h-1.2zM332.0 583.6h1.2v1.2h-1.2zM332.0 555.0h1.2v1.2h-1.2zM332.0 526.4h1.2v1.2h-1.2zM332.0 497.8h1.2v1.2h-1.2zM332.0 469.2h1.2v1.2h-1.2zM332.0 440.6h1.2v1.2h-1.2zM332.0 412.0h1.2v1.2h-1.2zM332.0 383.4h1.2v1.2h-1.2zM332.0 354.8h1.2v1.2h-1.2zM332.0 326.2h1.2v1.2h-1.2zM332.0 297.6h1.2v1.2h-1.2zM332.0 269.0h1.2v1.2h-1.2zM332.0 240.4h1.2v1.2h-1.2zM332.0 211.8h1.2v1.2h-1.2zM332.0 183.2h1.2v1.2h-1.2zM360.6 726.6h1.2v1.2h-1.2zM360.6 698.0h1.2v1.2h-1.2zM360.6 669.4h1.2v1.2h-1.2zM360.6 640.8h1.2v1.2h-1.2zM360.6 612.2h1.2v1.2h-1.2zM360.6 583.6h1.2v1.2h-1.2zM360.6 555.0h1.2v1.2h-1.2zM360.6 526.4h1.2v1.2h-1.2zM360.6 497.8h1.2v1.2h-1.2zM360.6 469.2h1.2v1.2h-1.2zM360.6 440.6h1.2v1.2h-1.2zM360.6 412.0h1.2v1.2h-1.2zM360.6 383.4h1.2v1.2h-1.2zM360.6 354.8h1.2v1.2h-1.2zM360.6 326.2h1.2v1.2h-1.2zM360.6 297.6h1.2v1.2h-1.2zM360.6 269.0h1.2v1.2h-1.2zM360.6 240.4h1.2v1.2h-1.2zM360.6 211.8h1.2v1.2h-1.2zM360.6 183.2h1.2v1.2h-1.2zM389.2 726.6h1.2v1.2h-1.2zM389.2 698.0h1.2v1.2h-1.2zM389.2 669.4h1.2v1.2h-1.2zM389.2 640.8h1.2v1.2h-1.2zM389.2 612.2h1.2v1.2h-1.2zM389.2 583.6h1.2v1.2h-1.2zM389.2 555.0h1.2v1.2h-1.2zM389.2 526.4h1.2v1.2h-1.2zM389.2 497.8h1.2v1.2h-1.2zM389.2 469.2h1.2v1.2h-1.2zM389.2 440.6h1.2v1.2h-1.2zM389.2 412.0h1.2v1.2h-1.2zM389.2 383.4h1.2v1.2h-1.2zM389.2 354.8h1.2v1.2h-1.2zM389.2 326.2h1.2v1.2h-1.2zM389.2 297.6h1.2v1.2h-1.2zM389.2 269.0h1.2v1.2h-1.2zM389.2 240.4h1.2v1.2h-1.2zM389.2 211.8h1.2v1.2h-1.2zM389.2 183.2h1.2v1.2h-1.2zM417.8 726.6h1.2v1.2h-1.2zM417.8 698.0h1.2v1.2h-1.2zM417.8 669.4h1.2v1.2h-1.2zM417.8 640.8h1.2v1.2h-1.2zM417.8 612.2h1.2v1.2h-1.2zM417.8 583.6h1.2v1.2h-1.2zM417.8 555.0h1.2v1.2h-1.2zM417.8 526.4h1.2v1.2h-1.2zM417.8 497.8h1.2v1.2h-1.2zM417.8 469.2h1.2v1.2h-1.2zM417.8 440.6h1.2v1.2h-1.2zM417.8 412.0h1.2v1.2h-1.2zM417.8 383.4h1.2v1.2h-1.2zM417.8 354.8h1.2v1.2h-1.2zM417.8 326.2h1.2v1.2h-1.2zM417.8 297.6h1.2v1.2h-1.2zM417.8 269.0h1.2v1.2h-1.2zM417.8 240.4h1.2v1.2h-1.2zM417.8 211.8h1.2v1.2h-1.2zM417.8 183.2h1.2v1.2h-1.2zM446.4 726.6h1.2v1.2h-1.2zM446.4 698.0h1.2v1.2h-1.2zM446.4 669.4h1.2v1.2h-1.2zM446.4 640.8h1.2v1.2h-1.2zM446.4 612.2h1.2v1.2h-1.2zM446.4 583.6h1.2v1.2h-1.2zM446.4 555.0h1.2v1.2h-1.2zM446.4 526.4h1.2v1.2h-1.2zM446.4 497.8h1.2v1.2h-1.2zM446.4 469.2h1.2v1.2h-1.2zM446.4 440.6h1.2v1.2h-1.2zM446.4 412.0h1.2v1.2h-1.2zM446.4 383.4h1.2v1.2h-1.2zM446.4 354.8h1.2v1.2h-1.2zM446.4 326.2h1.2v1.2h-1.2zM446.4 297.6h1.2v1.2h-1.2zM446.4 269.0h1.2v1.2h-1.2zM446.4 240.4h1.2v1.2h-1.2zM446.4 211.8h1.2v1.2h-1.2zM446.4 183.2h1.2v1.2h-1.2zM475.0 726.6h1.2v1.2h-1.2zM475.0 698.0h1.2v1.2h-1.2zM475.0 669.4h1.2v1.2h-1.2zM475.0 640.8h1.2v1.2h-1.2zM475.0 612.2h1.2v1.2h-1.2zM475.0 583.6h1.2v1.2h-1.2zM475.0 555.0h1.2v1.2h-1.2zM475.0 526.4h1.2v1.2h-1.2zM475.0 497.8h1.2v1.2h-1.2zM475.0 469.2h1.2v1.2h-1.2zM475.0 440.6h1.2v1.2h-1.2zM475.0 412.0h1.2v1.2h-1.2zM475.0 383.4h1.2v1.2h-1.2zM475.0 354.8h1.2v1.2h-1.2zM475.0 326.2h1.2v1.2h-1.2zM475.0 297.6h1.2v1.2h-1.2zM475.0 269.0h1.2v1.2h-1.2zM475.0 240.4h1.2v1.2h-1.2zM475.0 211.8h1.2v1.2h-1.2zM475.0 183.2h1.2v1.2h-1.2zM503.6 726.6h1.2v1.2h-1.2zM503.6 698.0h1.2v1.2h-1.2zM503.6 669.4h1.2v1.2h-1.2zM503.6 640.8h1.2v1.2h-1.2zM503.6 612.2h1.2v1.2h-1.2zM503.6 583.6h1.2v1.2h-1.2zM503.6 555.0h1.2v1.2h-1.2zM503.6 526.4h1.2v1.2h-1.2zM503.6 497.8h1.2v1.2h-1.2zM503.6 469.2h1.2v1.2h-1.2zM503.6 440.6h1.2v1.2h-1.2zM503.6 412.0h1.2v1.2h-1.2zM503.6 383.4h1.2v1.2h-1.2zM503.6 354.8h1.2v1.2h-1.2zM503.6 326.2h1.2v1.2h-1.2zM503.6 297.6h1.2v1.2h-1.2zM503.6 269.0h1.2v1.2h-1.2zM503.6 240.4h1.2v1.2h-1.2zM503.6 211.8h1.2v1.2h-1.2zM503.6 183.2h1.2v1.2h-1.2zM532.2 726.6h1.2v1.2h-1.2zM532.2 698.0h1.2v1.2h-1.2zM532.2 669.4h1.2v1.2h-1.2zM532.2 640.8h1.2v1.2h-1.2zM532.2 612.2h1.2v1.2h-1.2zM532.2 583.6h1.2v1.2h-1.2zM532.2 555.0h1.2v1.2h-1.2zM532.2 526.4h1.2v1.2h-1.2zM532.2 497.8h1.2v1.2h-1.2zM532.2 469.2h1.2v1.2h-1.2zM532.2 440.6h1.2v1.2h-1.2zM532.2 412.0h1.2v1.2h-1.2zM532.2 383.4h1.2v1.2h-1.2zM532.2 354.8h1.2v1.2h-1.2zM532.2 326.2h1.2v1.2h-1.2zM532.2 297.6h1.2v1.2h-1.2zM532.2 269.0h1.2v1.2h-1.2zM532.2 240.4h1.2v1.2h-1.2zM532.2 211.8h1.2v1.2h-1.2zM532.2 183.2h1.2v1.2h-1.2zM560.8 726.6h1.2v1.2h-1.2zM560.8 698.0h1.2v1.2h-1.2zM560.8 669.4h1.2v1.2h-1.2zM560.8 640.8h1.2v1.2h-1.2zM560.8 612.2h1.2v1.2h-1.2zM560.8 583.6h1.2v1.2h-1.2zM560.8 555.0h1.2v1.2h-1.2zM560.8 526.4h1.2v1.2h-1.2zM560.8 497.8h1.2v1.2h-1.2zM560.8 469.2h1.2v1.2h-1.2zM560.8 440.6h1.2v1.2h-1.2zM560.8 412.0h1.2v1.2h-1.2zM560.8 383.4h1.2v1.2h-1.2zM560.8 354.8h1.2v1.2h-1.2zM560.8 326.2h1.2v1.2h-1.2zM560.8 297.6h1.2v1.2h-1.2zM560.8 269.0h1.2v1.2h-1.2zM560.8 240.4h1.2v1.2h-1.2zM560.8 211.8h1.2v1.2h-1.2zM560.8 183.2h1.2v1.2h-1.2zM589.4 726.6h1.2v1.2h-1.2zM589.4 698.0h1.2v1.2h-1.2zM589.4 669.4h1.2v1.2h-1.2zM589.4 640.8h1.2v1.2h-1.2zM589.4 612.2h1.2v1.2h-1.2zM589.4 583.6h1.2v1.2h-1.2zM589.4 555.0h1.2v1.2h-1.2zM589.4 526.4h1.2v1.2h-1.2zM589.4 497.8h1.2v1.2h-1.2zM589.4 469.2h1.2v1.2h-1.2zM589.4 440.6h1.2v1.2h-1.2zM589.4 412.0h1.2v1.2h-1.2zM589.4 383.4h1.2v1.2h-1.2zM589.4 354.8h1.2v1.2h-1.2zM589.4 326.2h1.2v1.2h-1.2zM589.4 297.6h1.2v1.2h-1.2zM589.4 269.0h1.2v1.2h-1.2zM589.4 240.4h1.2v1.2h-1.2zM589.4 211.8h1.2v1.2h-1.2zM589.4 183.2h1.2v1.2h-1.2zM618.0 726.6h1.2v1.2h-1.2zM618.0 698.0h1.2v1.2h-1.2zM618.0 669.4h1.2v1.2h-1.2zM618.0 640.8h1.2v1.2h-1.2zM618.0 612.2h1.2v1.2h-1.2zM618.0 583.6h1.2v1.2h-1.2zM618.0 555.0h1.2v1.2h-1.2zM618.0 526.4h1.2v1.2h-1.2zM618.0 497.8h1.2v1.2h-1.2zM618.0 469.2h1.2v1.2h-1.2zM618.0 440.6h1.2v1.2h-1.2zM618.0 412.0h1.2v1.2h-1.2zM618.0 383.4h1.2v1.2h-1.2zM618.0 354.8h1.2v1.2h-1.2zM618.0 326.2h1.2v1.2h-1.2zM618.0 297.6h1.2v1.2h-1.2zM618.0 269.0h1.2v1.2h-1.2zM618.0 240.4h1.2v1.2h-1.2zM618.0 211.8h1.2v1.2h-1.2zM618.0 183.2h1.2v1.2h-1.2zM646.6 726.6h1.2v1.2h-1.2zM646.6 698.0h1.2v1.2h-1.2zM646.6 669.4h1.2v1.2h-1.2zM646.6 640.8h1.2v1.2h-1.2zM646.6 612.2h1.2v1.2h-1.2zM646.6 583.6h1.2v1.2h-1.2zM646.6 555.0h1.2v1.2h-1.2zM646.6 526.4h1.2v1.2h-1.2zM646.6 497.8h1.2v1.2h-1.2zM646.6 469.2h1.2v1.2h-1.2zM646.6 440.6h1.2v1.2h-1.2zM646.6 412.0h1.2v1.2h-1.2zM646.6 383.4h1.2v1.2h-1.2zM646.6 354.8h1.2v1.2h-1.2zM646.6 326.2h1.2v1.2h-1.2zM646.6 297.6h1.2v1.2h-1.2zM646.6 269.0h1.2v1.2h-1.2zM646.6 240.4h1.2v1.2h-1.2zM646.6 211.8h1.2v1.2h-1.2zM646.6 183.2h1.2v1.2h-1.2zM675.2 726.6h1.2v1.2h-1.2zM675.2 698.0h1.2v1.2h-1.2zM675.2 669.4h1.2v1.2h-1.2zM675.2 640.8h1.2v1.2h-1.2zM675.2 612.2h1.2v1.2h-1.2zM675.2 583.6h1.2v1.2h-1.2zM675.2 555.0h1.2v1.2h-1.2zM675.2 526.4h1.2v1.2h-1.2zM675.2 497.8h1.2v1.2h-1.2zM675.2 469.2h1.2v1.2h-1.2zM675.2 440.6h1.2v1.2h-1.2zM675.2 412.0h1.2v1.2h-1.2zM675.2 383.4h1.2v1.2h-1.2zM675.2 354.8h1.2v1.2h-1.2zM675.2 326.2h1.2v1.2h-1.2zM675.2 297.6h1.2v1.2h-1.2zM675.2 269.0h1.2v1.2h-1.2zM675.2 240.4h1.2v1.2h-1.2zM675.2 211.8h1.2v1.2h-1.2zM675.2 183.2h1.2v1.2h-1.2zM703.8 726.6h1.2v1.2h-1.2zM703.8 698.0h1.2v1.2h-1.2zM703.8 669.4h1.2v1.2h-1.2zM703.8 640.8h1.2v1.2h-1.2zM703.8 612.2h1.2v1.2h-1.2zM703.8 583.6h1.2v1.2h-1.2zM703.8 555.0h1.2v1.2h-1.2zM703.8 526.4h1.2v1.2h-1.2zM703.8 497.8h1.2v1.2h-1.2zM703.8 469.2h1.2v1.2h-1.2zM703.8 440.6h1.2v1.2h-1.2zM703.8 412.0h1.2v1.2h-1.2zM703.8 383.4h1.2v1.2h-1.2zM703.8 354.8h1.2v1.2h-1.2zM703.8 326.2h1.2v1.2h-1.2zM703.8 297.6h1.2v1.2h-1.2zM703.8 269.0h1.2v1.2h-1.2zM703.8 240.4h1.2v1.2h-1.2zM703.8 211.8h1.2v1.2h-1.2zM703.8 183.2h1.2v1.2h-1.2zM732.4 726.6h1.2v1.2h-1.2zM732.4 698.0h1.2v1.2h-1.2zM732.4 669.4h1.2v1.2h-1.2zM732.4 640.8h1.2v1.2h-1.2zM732.4 612.2h1.2v1.2h-1.2zM732.4 583.6h1.2v1.2h-1.2zM732.4 555.0h1.2v1.2h-1.2zM732.4 526.4h1.2v1.2h-1.2zM732.4 497.8h1.2v1.2h-1.2zM732.4 469.2h1.2v1.2h-1.2zM732.4 440.6h1.2v1.2h-1.2zM732.4 412.0h1.2v1.2h-1.2zM732.4 383.4h1.2v1.2h-1.2zM732.4 354.8h1.2v1.2h-1.2zM732.4 326.2h1.2v1.2h-1.2zM732.4 297.6h1.2v1.2h-1.2zM732.4 269.0h1.2v1.2h-1.2zM732.4 240.4h1.2v1.2h-1.2zM732.4 211.8h1.2v1.2h-1.2zM732.4 183.2h1.2v1.2h-1.2zM761.0 726.6h1.2v1.2h-1.2zM761.0 698.0h1.2v1.2h-1.2zM761.0 669.4h1.2v1.2h-1.2zM761.0 640.8h1.2v1.2h-1.2zM761.0 612.2h1.2v1.2h-1.2zM761.0 583.6h1.2v1.2h-1.2zM761.0 555.0h1.2v1.2h-1.2zM761.0 526.4h1.2v1.2h-1.2zM761.0 497.8h1.2v1.2h-1.2zM761.0 469.2h1.2v1.2h-1.2zM761.0 440.6h1.2v1.2h-1.2zM761.0 412.0h1.2v1.2h-1.2zM761.0 383.4h1.2v1.2h-1.2zM761.0 354.8h1.2v1.2h-1.2zM761.0 326.2h1.2v1.2h-1.2zM761.0 297.6h1.2v1.2h-1.2zM761.0 269.0h1.2v1.2h-1.2zM761.0 240.4h1.2v1.2h-1.2zM761.0 211.8h1.2v1.2h-1.2zM761.0 183.2h1.2v1.2h-1.2zM789.6 726.6h1.2v1.2h-1.2zM789.6 698.0h1.2v1.2h-1.2zM789.6 669.4h1.2v1.2h-1.2zM789.6 640.8h1.2v1.2h-1.2zM789.6 612.2h1.2v1.2h-1.2zM789.6 583.6h1.2v1.2h-1.2zM789.6 555.0h1.2v1.2h-1.2zM789.6 526.4h1.2v1.2h-1.2zM789.6 497.8h1.2v1.2h-1.2zM789.6 469.2h1.2v1.2h-1.2zM789.6 440.6h1.2v1.2h-1.2zM789.6 412.0h1.2v1.2h-1.2zM789.6 383.4h1.2v1.2h-1.2zM789.6 354.8h1.2v1.2h-1.2zM789.6 326.2h1.2v1.2h-1.2zM789.6 297.6h1.2v1.2h-1.2zM789.6 269.0h1.2v1.2h-1.2zM789.6 240.4h1.2v1.2h-1.2zM789.6 211.8h1.2v1.2h-1.2zM789.6 183.2h1.2v1.2h-1.2zM818.2 726.6h1.2v1.2h-1.2zM818.2 698.0h1.2v1.2h-1.2zM818.2 669.4h1.2v1.2h-1.2zM818.2 640.8h1.2v1.2h-1.2zM818.2 612.2h1.2v1.2h-1.2zM818.2 583.6h1.2v1.2h-1.2zM818.2 555.0h1.2v1.2h-1.2zM818.2 526.4h1.2v1.2h-1.2zM818.2 497.8h1.2v1.2h-1.2zM818.2 469.2h1.2v1.2h-1.2zM818.2 440.6h1.2v1.2h-1.2zM818.2 412.0h1.2v1.2h-1.2zM818.2 383.4h1.2v1.2h-1.2zM818.2 354.8h1.2v1.2h-1.2zM818.2 326.2h1.2v1.2h-1.2zM818.2 297.6h1.2v1.2h-1.2zM818.2 269.0h1.2v1.2h-1.2zM818.2 240.4h1.2v1.2h-1.2zM818.2 211.8h1.2v1.2h-1.2zM818.2 183.2h1.2v1.2h-1.2zM846.8 726.6h1.2v1.2h-1.2zM846.8 698.0h1.2v1.2h-1.2zM846.8 669.4h1.2v1.2h-1.2zM846.8 640.8h1.2v1.2h-1.2zM846.8 612.2h1.2v1.2h-1.2zM846.8 583.6h1.2v1.2h-1.2zM846.8 555.0h1.2v1.2h-1.2zM846.8 526.4h1.2v1.2h-1.2zM846.8 497.8h1.2v1.2h-1.2zM846.8 469.2h1.2v1.2h-1.2zM846.8 440.6h1.2v1.2h-1.2zM846.8 412.0h1.2v1.2h-1.2zM846.8 383.4h1.2v1.2h-1.2zM846.8 354.8h1.2v1.2h-1.2zM846.8 326.2h1.2v1.2h-1.2zM846.8 297.6h1.2v1.2h-1.2zM846.8 269.0h1.2v1.2h-1.2zM846.8 240.4h1.2v1.2h-1.2zM846.8 211.8h1.2v1.2h-1.2zM846.8 183.2h1.2v1.2h-1.2zM875.4 726.6h1.2v1.2h-1.2zM875.4 698.0h1.2v1.2h-1.2zM875.4 669.4h1.2v1.2h-1.2zM875.4 640.8h1.2v1.2h-1.2zM875.4 612.2h1.2v1.2h-1.2zM875.4 583.6h1.2v1.2h-1.2zM875.4 555.0h1.2v1.2h-1.2zM875.4 526.4h1.2v1.2h-1.2zM875.4 497.8h1.2v1.2h-1.2zM875.4 469.2h1.2v1.2h-1.2zM875.4 440.6h1.2v1.2h-1.2zM875.4 412.0h1.2v1.2h-1.2zM875.4 383.4h1.2v1.2h-1.2zM875.4 354.8h1.2v1.2h-1.2zM875.4 326.2h1.2v1.2h-1.2zM875.4 297.6h1.2v1.2h-1.2zM875.4 269.0h1.2v1.2h-1.2zM875.4 240.4h1.2v1.2h-1.2zM875.4 211.8h1.2v1.2h-1.2zM875.4 183.2h1.2v1.2h-1.2zM904.0 726.6h1.2v1.2h-1.2zM904.0 698.0h1.2v1.2h-1.2zM904.0 669.4h1.2v1.2h-1.2zM904.0 640.8h1.2v1.2h-1.2zM904.0 612.2h1.2v1.2h-1.2zM904.0 583.6h1.2v1.2h-1.2zM904.0 555.0h1.2v1.2h-1.2zM904.0 526.4h1.2v1.2h-1.2zM904.0 497.8h1.2v1.2h-1.2zM904.0 469.2h1.2v1.2h-1.2zM904.0 440.6h1.2v1.2h-1.2zM904.0 412.0h1.2v1.2h-1.2zM904.0 383.4h1.2v1.2h-1.2zM904.0 354.8h1.2v1.2h-1.2zM904.0 326.2h1.2v1.2h-1.2zM904.0 297.6h1.2v1.2h-1.2zM904.0 269.0h1.2v1.2h-1.2zM904.0 240.4h1.2v1.2h-1.2zM904.0 211.8h1.2v1.2h-1.2zM904.0 183.2h1.2v1.2h-1.2zM932.6 726.6h1.2v1.2h-1.2zM932.6 698.0h1.2v1.2h-1.2zM932.6 669.4h1.2v1.2h-1.2zM932.6 640.8h1.2v1.2h-1.2zM932.6 612.2h1.2v1.2h-1.2zM932.6 583.6h1.2v1.2h-1.2zM932.6 555.0h1.2v1.2h-1.2zM932.6 526.4h1.2v1.2h-1.2zM932.6 497.8h1.2v1.2h-1.2zM932.6 469.2h1.2v1.2h-1.2zM932.6 440.6h1.2v1.2h-1.2zM932.6 412.0h1.2v1.2h-1.2zM932.6 383.4h1.2v1.2h-1.2zM932.6 354.8h1.2v1.2h-1.2zM932.6 326.2h1.2v1.2h-1.2zM932.6 297.6h1.2v1.2h-1.2zM932.6 269.0h1.2v1.2h-1.2zM932.6 240.4h1.2v1.2h-1.2zM932.6 211.8h1.2v1.2h-1.2zM932.6 183.2h1.2v1.2h-1.2zM961.2 726.6h1.2v1.2h-1.2zM961.2 698.0h1.2v1.2h-1.2zM961.2 669.4h1.2v1.2h-1.2zM961.2 640.8h1.2v1.2h-1.2zM961.2 612.2h1.2v1.2h-1.2zM961.2 583.6h1.2v1.2h-1.2zM961.2 555.0h1.2v1.2h-1.2zM961.2 526.4h1.2v1.2h-1.2zM961.2 497.8h1.2v1.2h-1.2zM961.2 469.2h1.2v1.2h-1.2zM961.2 440.6h1.2v1.2h-1.2zM961.2 412.0h1.2v1.2h-1.2zM961.2 383.4h1.2v1.2h-1.2zM961.2 354.8h1.2v1.2h-1.2zM961.2 326.2h1.2v1.2h-1.2zM961.2 297.6h1.2v1.2h-1.2zM961.2 269.0h1.2v1.2h-1.2zM961.2 240.4h1.2v1.2h-1.2zM961.2 211.8h1.2v1.2h-1.2zM961.2 183.2h1.2v1.2h-1.2zM989.8 726.6h1.2v1.2h-1.2zM989.8 698.0h1.2v1.2h-1.2zM989.8 669.4h1.2v1.2h-1.2zM989.8 640.8h1.2v1.2h-1.2zM989.8 612.2h1.2v1.2h-1.2zM989.8 583.6h1.2v1.2h-1.2zM989.8 555.0h1.2v1.2h-1.2zM989.8 526.4h1.2v1.2h-1.2zM989.8 497.8h1.2v1.2h-1.2zM989.8 469.2h1.2v1.2h-1.2zM989.8 440.6h1.2v1.2h-1.2zM989.8 412.0h1.2v1.2h-1.2zM989.8 383.4h1.2v1.2h-1.2zM989.8 354.8h1.2v1.2h-1.2zM989.8 326.2h1.2v1.2h-1.2zM989.8 297.6h1.2v1.2h-1.2zM989.8 269.0h1.2v1.2h-1.2zM989.8 240.4h1.2v1.2h-1.2zM989.8 211.8h1.2v1.2h-1.2zM989.8 183.2h1.2v1.2h-1.2zM1018.4 726.6h1.2v1.2h-1.2zM1018.4 698.0h1.2v1.2h-1.2zM1018.4 669.4h1.2v1.2h-1.2zM1018.4 640.8h1.2v1.2h-1.2zM1018.4 612.2h1.2v1.2h-1.2zM1018.4 583.6h1.2v1.2h-1.2zM1018.4 555.0h1.2v1.2h-1.2zM1018.4 526.4h1.2v1.2h-1.2zM1018.4 497.8h1.2v1.2h-1.2zM1018.4 469.2h1.2v1.2h-1.2zM1018.4 440.6h1.2v1.2h-1.2zM1018.4 412.0h1.2v1.2h-1.2zM1018.4 383.4h1.2v1.2h-1.2zM1018.4 354.8h1.2v1.2h-1.2zM1018.4 326.2h1.2v1.2h-1.2zM1018.4 297.6h1.2v1.2h-1.2zM1018.4 269.0h1.2v1.2h-1.2zM1018.4 240.4h1.2v1.2h-1.2zM1018.4 211.8h1.2v1.2h-1.2zM1018.4 183.2h1.2v1.2h-1.2zM1047.0 726.6h1.2v1.2h-1.2zM1047.0 698.0h1.2v1.2h-1.2zM1047.0 669.4h1.2v1.2h-1.2zM1047.0 640.8h1.2v1.2h-1.2zM1047.0 612.2h1.2v1.2h-1.2zM1047.0 583.6h1.2v1.2h-1.2zM1047.0 555.0h1.2v1.2h-1.2zM1047.0 526.4h1.2v1.2h-1.2zM1047.0 497.8h1.2v1.2h-1.2zM1047.0 469.2h1.2v1.2h-1.2zM1047.0 440.6h1.2v1.2h-1.2zM1047.0 412.0h1.2v1.2h-1.2zM1047.0 383.4h1.2v1.2h-1.2zM1047.0 354.8h1.2v1.2h-1.2zM1047.0 326.2h1.2v1.2h-1.2zM1047.0 297.6h1.2v1.2h-1.2zM1047.0 269.0h1.2v1.2h-1.2zM1047.0 240.4h1.2v1.2h-1.2zM1047.0 211.8h1.2v1.2h-1.2zM1047.0 183.2h1.2v1.2h-1.2zM1075.6 726.6h1.2v1.2h-1.2zM1075.6 698.0h1.2v1.2h-1.2zM1075.6 669.4h1.2v1.2h-1.2zM1075.6 640.8h1.2v1.2h-1.2zM1075.6 612.2h1.2v1.2h-1.2zM1075.6 583.6h1.2v1.2h-1.2zM1075.6 555.0h1.2v1.2h-1.2zM1075.6 526.4h1.2v1.2h-1.2zM1075.6 497.8h1.2v1.2h-1.2zM1075.6 469.2h1.2v1.2h-1.2zM1075.6 440.6h1.2v1.2h-1.2zM1075.6 412.0h1.2v1.2h-1.2zM1075.6 383.4h1.2v1.2h-1.2zM1075.6 354.8h1.2v1.2h-1.2zM1075.6 326.2h1.2v1.2h-1.2zM1075.6 297.6h1.2v1.2h-1.2zM1075.6 269.0h1.2v1.2h-1.2zM1075.6 240.4h1.2v1.2h-1.2zM1075.6 211.8h1.2v1.2h-1.2zM1075.6 183.2h1.2v1.2h-1.2zM1104.2 726.6h1.2v1.2h-1.2zM1104.2 698.0h1.2v1.2h-1.2zM1104.2 669.4h1.2v1.2h-1.2zM1104.2 640.8h1.2v1.2h-1.2zM1104.2 612.2h1.2v1.2h-1.2zM1104.2 583.6h1.2v1.2h-1.2zM1104.2 555.0h1.2v1.2h-1.2zM1104.2 526.4h1.2v1.2h-1.2zM1104.2 497.8h1.2v1.2h-1.2zM1104.2 469.2h1.2v1.2h-1.2zM1104.2 440.6h1.2v1.2h-1.2zM1104.2 412.0h1.2v1.2h-1.2zM1104.2 383.4h1.2v1.2h-1.2zM1104.2 354.8h1.2v1.2h-1.2zM1104.2 326.2h1.2v1.2h-1.2zM1104.2 297.6h1.2v1.2h-1.2zM1104.2 269.0h1.2v1.2h-1.2zM1104.2 240.4h1.2v1.2h-1.2zM1104.2 211.8h1.2v1.2h-1.2zM1104.2 183.2h1.2v1.2h-1.2zM1132.8 726.6h1.2v1.2h-1.2zM1132.8 698.0h1.2v1.2h-1.2zM1132.8 669.4h1.2v1.2h-1.2zM1132.8 640.8h1.2v1.2h-1.2zM1132.8 612.2h1.2v1.2h-1.2zM1132.8 583.6h1.2v1.2h-1.2zM1132.8 555.0h1.2v1.2h-1.2zM1132.8 526.4h1.2v1.2h-1.2zM1132.8 497.8h1.2v1.2h-1.2zM1132.8 469.2h1.2v1.2h-1.2zM1132.8 440.6h1.2v1.2h-1.2zM1132.8 412.0h1.2v1.2h-1.2zM1132.8 383.4h1.2v1.2h-1.2zM1132.8 354.8h1.2v1.2h-1.2zM1132.8 326.2h1.2v1.2h-1.2zM1132.8 297.6h1.2v1.2h-1.2zM1132.8 269.0h1.2v1.2h-1.2zM1132.8 240.4h1.2v1.2h-1.2zM1132.8 211.8h1.2v1.2h-1.2zM1132.8 183.2h1.2v1.2h-1.2z" fill="#3c3c3c"/><rect x="188.5" y="170" width="2" height="562" fill="#141414"/><rect x="474.5" y="170" width="2" height="562" fill="#141414"/><rect x="760.5" y="170" width="2" height="562" fill="#141414"/><rect x="1046.5" y="170" width="2" height="562" fill="#141414"/><rect x="95" y="697.5" width="1044" height="2" fill="#141414"/><rect x="95" y="411.5" width="1044" height="2" fill="#141414"/><path d="M471.5 334.1 L534.4 341.6 M471.5 337 L555.2 347.5 M539.2 327.2 L581.9 332" fill="none" stroke="#c86868" stroke-width="0.85" stroke-linejoin="miter"/><path d="M373.2 294.3 L445.6 301.2 M350 299.7 L431 308.2 M349.3 309.7 L420.2 316.6 M451 301.2 L464.8 272.7 M513.9 274.3 L590.9 282.7 M360.5 270 L359.6 278.4 M372.1 270 L370.5 282 M557.5 355.2 L581.7 357 M584.4 332.8 L581.7 357 M517.3 361.3 L554.7 365.9 L553.2 379.5 M516.6 367.5 L513.1 379.5 L501.9 385.8 M417.1 327.1 L413.2 337.4 L411.7 344.1 L403.2 348.2 L394.7 357 L383.9 354.8 M420.9 316.6 L417.1 327.1 M485.2 357.9 L483.6 371.3 L482 384 M475.6 356.4 L485.2 357.9 M335.4 380.4 L378.6 384.2 M337 390.4 L389.3 397.3 M350.8 407.4 L389.3 410.7 M351.6 414.3 L378.6 416.3 M347 414.3 L346.5 439 M379.3 416.6 L377 442.8 M380 452 L397 455.1 M414.8 424 L474.1 429.7 M397 455.1 L393.2 489.8 M404.4 467.4 L404 490.3 M406.3 462.8 L486.4 469.8 M441 467.4 L440.2 493.3 M486.4 469.8 L488 484.4 M473.1 395 L472.5 416.6 M478.7 413.5 L476.4 429.7 M492.6 412.8 L490.7 424.3 M501.8 393.5 L500.3 419.7 M424.8 392.3 L422.5 413.5 M401.7 416.6 L398.6 452 M341.6 489 L381.6 496 M344 502.2 L384 509.4 L401.6 512.6 M400.8 515.8 L401 618.2 M418.4 522.5 L427.5 525.4 L438.4 541.4 L447.2 551.8 L456 563.8 L462.4 573.4 L470 582.7 M476.5 507 L467.5 511 L460 516.6 L455.7 526.2 L456 536.6 L461.6 547 L468.8 557.4 L476 567.8 L484.5 579.5 L492 591 L502.4 605.4 L511.2 618.2 M476 567.8 L481.6 600.6 L494.4 618.2 M411.2 571.5 L429.6 569.9 L447.2 568.6 M409.6 571 L380.5 602.5 L377.9 618.5 M411.5 589.4 L425.3 595 L439.2 597.4 M409.3 601.9 L407.2 611.8 L416.5 613.4 M476.9 507.4 L459.8 516.7 L455.3 526.4 L456.3 535.9 M520.7 497.5 L543.4 491.8 L583.5 489.4 M523.8 505.3 L552.2 503.9 L571.9 506 M522.4 518.1 L521.2 530.9 L539.4 533 L557.2 536.6 L579.2 530.9 M570.7 515 L569.3 529.5 M581.4 509.6 L579.2 530.9 M583.6 489.7 L579.3 531.5 L575.3 574 M581.5 510 L579.3 531.5 M540.7 533 L557.5 536.4 M564.4 524.1 L579.3 531.5 M536.2 327.1 L535.4 334.4 L534.7 341.7 M584.4 332.8 L583.2 344.8 L581.7 357 M598.1 618.1 L608.4 618.9 M573.3 594.7 L571.9 615.9 M359.6 278.4 L359.6 286.6 M369.6 293.8 L373.2 294.3 M557.2 355.6 L581.5 356.9 M517.4 361.5 L514.9 386 M554.7 366.2 L553.2 379.6 L552.9 392.9 L542.9 415.9 L540.4 428.4 M564.1 408.5 L562.4 420.7 L560.3 432.4 M508.1 427.4 L540.4 428.4 M515.5 436.1 L539.6 438.1 M585.8 436.5 L609.7 436.5 M585.2 443.6 L609.2 446.4 M446.3 421.4 L476.6 431.1 M490.4 424.3 L540.1 428.2 M561.5 421.4 L560 432.5 M585.6 436.4 L597 443.5 M564.7 486.9 L583.6 489.4" fill="none" stroke="#b42a2e" stroke-width="0.85" stroke-linejoin="miter"/><path d="M509.5 280.4 L591 289.9 L599.7 298.6 L598.8 300.8 L604 301.6 L603 310.3 M509.5 280.4 L507.4 301.2 L565.9 308.1 L566.7 309.4 L597.5 312.9 L597.5 318.5 L568 315.1 L567.6 313.8 L504.8 306.4 L503 319 M601.8 310.3 L619.6 311.6 L617.9 326.8 L601 324.6 L601.8 310.3 M611.7 310.3 L612 302.7 L620 303 L638.7 305.4 L652.3 301.6 L673.5 285.5 L705.8 326.9 L711.4 323.2 L682.8 288 L706.4 269.9 M607.2 270 L607.8 274 L616 274.7 L616.3 285.5 L622.5 285.5 L622.5 296 L639.9 297.3 L649.9 294.2 L669.1 279.9 L661 269.7 M669.8 269.7 L672.2 272.4 L674.7 270.5 L681.6 279.9 L694 269.9 M769.4 340 L759.5 422.1 M777.4 336.5 L814.1 339.6 L816.6 333.4 L834.6 334.6 L834 339.6 M816.6 333.4 L818.5 311 L815.3 309.7 L817.8 292.3 L834.6 294.6 L829.7 334 M857 285.5 L881.3 288.3 L878.8 313.5 L854.5 311 L857 285.5 M867 286.7 L868.8 279.6 L894.3 283 M881.3 288.3 L882.5 284.9 L894.3 286.7 M879.4 308.5 L884.4 309.1 L883.1 322.2 L869.5 320.3 L870.1 312.2 M863.2 312.2 L862.6 325.3 L876.3 326.5 L876.3 321.5 M884.4 315.3 L891.8 311.6 M876.3 326.5 L875 330.9 L879.4 332.7 L885 338 L888.1 343.9 M891.2 269.9 L898 271.2 L897.4 275.5 M895 283 L898 288 M816.5 330 L814.5 339.1 M888.9 344.1 L888.2 354.8 L882.3 420.6 M875.8 330 L883 335 L888.9 344.1 M676.1 365.5 L737.1 372.1 L733.1 402.8 L732.3 426.4 M676.1 365.5 L669.9 422.7 L706.6 427.7 L706.6 432.7 M673 397 L733.1 403.4 M673.5 393.5 L684.8 394.7 L685.4 397.8 M708.4 396 L715.9 396.6 L715.3 400.4 M722.2 398.4 L733.1 399.7 M785 351.8 L838.7 353.7 L836.1 382.1 L782.6 376.9 L785.2 351.5 M799.7 352.9 L800.2 348 L809.2 349.3 L807.6 353.8 M853.7 357.6 L884.3 360 L888.2 355.4 M853.7 357.6 L849.7 386.1 L874.5 389.3 L876.5 369.1 M862.8 356.7 L862.1 367.2 L877.1 369.1 L878.4 359.3 M875.8 386.1 L885.6 386.7 M781.2 417.1 L781.8 413.4 L815.2 410.8 L815.8 416 M587 369.8 L624.8 374.4 L623.5 385 M587 369.8 L585.5 385 M676.4 365.6 L700 368.3 M537 342 L651.8 356 L648.7 385 M651.7 355 L648 388.3 L643.7 419.7 L651.1 420.9 L649.3 444.6 M631.8 386.7 L648 388.3 M631.8 386.7 L628.1 418.7 M615.7 404.8 L629.4 406.2 M516.2 388.3 L629.4 401.6 M572.8 394.6 L570.9 406 M581.5 395 L584.6 381.1 L587.1 369.9 L624.4 374.3 L621.3 400.4 M549.1 397.3 L560.9 398.5 L560.3 404.8 L554.7 405.7 L550.4 439.6 L611.9 447.7 L618.2 411 L615 410.3 L615.7 404.8 M547.9 402.9 L551 403.5 L546.6 439.3 M500 433.4 L546.6 439.3 M443.3 379.6 L474.1 381.9 L520 388.9 M478.7 388.9 L491 390.4 L490.3 398.1 L483.3 398.1 L480.2 428.9 M480.2 430.5 L520 435.1 M412.4 429.7 L619.4 453.3 M446.3 504.6 L462.7 495.4 L491.1 486.8 L600 464.1 L683.6 445 L768.2 425.8 L810 422.7 L832.1 422.6 L893.4 428.4 L898.6 428.4 M587.4 489.7 L710 503.4 L824.1 517 L880 523 L898.6 524.3 M476.5 567.8 L520 570.2 L540 572.2 L574.8 574 M540 580.8 L740 594.4 M592.3 501.1 L611 502.1 L611.6 492.8 M606.6 503.4 L620.3 504.6 L619.7 512.7 L606 511.4 L606.6 503.4 M622.2 513.3 L625.3 494 M592.3 501.1 L590.5 519.5 L601 520.1 L600.4 535.5 L627.4 538.4 L628.9 526.3 L632.6 526.3 L634.1 514.4 L622.2 513.3 M654.1 522.6 L664.4 523.3 L665.2 517.4 L673.3 518.6 L672.6 524.1 L683 525.6 L679.3 555.9 L668.1 554.4 L668.9 541.9 L664.4 541.1 L663.7 543.8 L652.6 541.9 L654.1 522.6 M642.7 500.9 L667 503.4 L665.2 517.4 M683 525.6 L696 527 L698 512 M700.7 527 L714.8 528.5 L716.3 513 L740 515.4 L746.2 519.2 L746.9 511.5 L761.6 512.3 M714.8 528.5 L708.9 542.6 L734.1 545.6 L735.6 540.4 L753.1 537.7 L757.7 520.8 L746.9 519.2 M723.1 543.9 L724.6 533.1 L753.1 537.7 M709.3 482.8 L711.1 464.8 L720 465.4 M702.4 505.8 L704.3 506.5 L701.9 530 M710 450.4 L723.3 451.9 L721.9 463.7 L710 465.2 M710 465.2 L741.9 464.4 L742.6 459.3 L758.9 461.2 L756.7 487.4 L746.3 486.7 L745.6 489.6 L710 483.7 M758.9 461.2 L775.2 463 L775.2 451.9 L800.4 453.8 L797.4 480 L794.4 480.7 L793 490.4 L756.7 487.4 M775.2 451.9 L774.4 447.4 L807 443.7 L807 437 M831.5 448.9 L867 454.8 L862.6 483.7 L845.6 480.7 L845.6 479.3 L827 474.1 L831.5 448.9 M813.7 437 L814.4 454.1 L819.6 458.8 L829.3 461.5 M824.1 437.8 L824.8 448.9 L830 452.9 M836 437.5 L835.5 448 M843 437.8 L842 448 M888 448.9 L898.1 450.3 M898.1 482.2 L893.7 486.7 L898.1 490.4 M898.1 511.9 L892.2 516.3 L898.1 523.7 M882.6 505.9 L898.1 506.7 M715.9 513.3 L713.7 526.7 M773.1 513.5 L823.2 516.2 L822 545 M777 520 L800.1 522.8 L801.6 525.4 L815.5 526.2 L813.9 543.1 L793.9 540.8 L792.4 553.1 L777.7 551.6 L777 554.7 L767.7 553.1 L770.8 533.6 L774.7 533.1 L777 520 M773.1 513.5 L777 520 M804.4 579.3 L812.4 580.1 L811.6 589.3 L803.9 588.5 L804.4 579.3 M837 525.4 L876.3 530 L874.7 549.3 L867.8 550 L855.5 548.5 L854.7 552.3 L840.9 552.3 L840.1 557 L830.9 555.4 L831.6 546.2 L834.7 546.2 L837 525.4 M826.2 532.3 L834.7 533.1 M834 546.2 L820.8 545.4 L823.2 516.9 M868.6 549.3 L874.7 550 L874 558.5 L867.8 557 L868.6 549.3 M882.4 504.6 L898.6 506.5 M878.6 546.2 L898.6 548.5 M898.6 560.8 L885.5 567 L897.1 580.8 M884.7 617.8 L898.6 618.6 M720 592.4 L744.6 594.7 L760.8 597 L760.8 618.6 M744.6 594.7 L743.9 604.7 L760.8 606.2 M733.9 604 L743.9 604.7 M733.9 604 L724.6 618.6 M731.5 606 L727 618.6 M780.8 589.3 L777 618.6 M598.5 590 L628.9 592.2 L629.6 598.1 L640 599.6 L674.1 598.9 L674.1 618.9 M634.1 587 L640 597.4 L640 602.6 L691.1 606.3 M667.4 604.8 L665.9 618.9 M732.6 604.8 L725.2 618.1 M740 604 L732.6 604.8 M443.3 505 L458.7 496.7 L467.2 495 M480 506.2 L520 497.4 M438.4 518.2 L456 536.6 M476.5 567.8 L520 570.2 M492 591 L494 582 L498 579 L520 578.2 L540 580.8" fill="none" stroke="#d8d8d8" stroke-width="1.0" stroke-linejoin="miter"/><path d="M633.7 269.7 L628.1 333.6 M494.4 318.7 L628.1 333.6 L664.2 337.3 L664.8 329.4 L767.4 340.8 M664.2 337.3 L651.2 445 M767.5 340 L757.6 422.1 M777.5 340 L767.5 420.2 M785.5 269.7 L774.9 360 L767.5 420.2 M767.4 340.8 L760 340.2 M842.3 269.7 L834.6 334.6 L834 339.6 M849.8 269.9 L897.4 275.5 L895 283 L888.1 343.9 M898 281 L895 283 M834.6 334.6 L888.9 344.1 L897.3 345.6 M898 338.5 L890.2 421.9 M843.2 335.9 L836.1 416.7 M414 432 L618.2 453.9 L660 444 M660 371.2 L651.1 446.4 M491.8 483.3 L600 459.1 L657.5 445 L758.2 422.1 L780 418.6 L836.1 416.7 L898.6 422.6 M613.5 475.4 L710 453.3 L758.9 442.2 L810.7 436.6 L847.8 438.1 L898.1 443 M595.4 481.6 L613.5 483.2 L710 493.3 L803.3 503.7 L879.6 512.1 M642.7 486.6 L638.4 530 L633.3 578.4 M702.4 492.8 L698.7 530 L693.3 582.6 L690.4 618.9 M810.7 436.6 L803.3 503.7 M887.8 442.2 L879.6 512.1 L875.9 545 L871.7 594.7 L869.3 618.6 M761.1 499.3 L753.1 587 M821.9 505.9 L812.4 590.8 M878.6 522.3 L898.6 524.3 M873.2 579.3 L898.6 580.8 M786.2 588.5 L782.4 618.6 M578.5 574.4 L633.3 578.4 L693.3 582.6 L740 585.6 L786.2 588.5 L871.7 594.7 M491 483.6 L520 476.7" fill="none" stroke="#1ed2e6" stroke-width="1.0" stroke-linejoin="miter"/><text x="725.7" y="296" font-family="Liberation Sans" font-size="9" text-anchor="middle" fill="#dcd400" textLength="12.9" lengthAdjust="spacingAndGlyphs" dominant-baseline="central">445</text><text x="649.3" y="347.4" font-family="Liberation Sans" font-size="9" text-anchor="middle" fill="#dcd400" textLength="12.9" lengthAdjust="spacingAndGlyphs" dominant-baseline="central">548</text><text x="715.4" y="355.3" font-family="Liberation Sans" font-size="9" text-anchor="middle" fill="#dcd400" textLength="17.2" lengthAdjust="spacingAndGlyphs" dominant-baseline="central">1931</text><text x="851.4" y="324" font-family="Liberation Sans" font-size="9" text-anchor="middle" fill="#dcd400" textLength="17.2" lengthAdjust="spacingAndGlyphs" dominant-baseline="central">2360</text><text x="862.8" y="406.3" font-family="Liberation Sans" font-size="9" text-anchor="middle" fill="#dcd400" textLength="17.2" lengthAdjust="spacingAndGlyphs" dominant-baseline="central">1614</text><text x="672.6" y="476.6" font-family="Liberation Sans" font-size="9" text-anchor="middle" fill="#dcd400" textLength="17.2" lengthAdjust="spacingAndGlyphs" dominant-baseline="central">1612</text><text x="607.9" y="557.1" font-family="Liberation Sans" font-size="9" text-anchor="middle" fill="#dcd400" textLength="17.2" lengthAdjust="spacingAndGlyphs" dominant-baseline="central">1705</text><text x="664.4" y="566" font-family="Liberation Sans" font-size="9" text-anchor="middle" fill="#dcd400" textLength="17.2" lengthAdjust="spacingAndGlyphs" dominant-baseline="central">1706</text><text x="727.8" y="564.8" font-family="Liberation Sans" font-size="9" text-anchor="middle" fill="#dcd400" textLength="17.2" lengthAdjust="spacingAndGlyphs" dominant-baseline="central">1707</text><text x="785.4" y="571.6" font-family="Liberation Sans" font-size="9" text-anchor="middle" fill="#dcd400" textLength="17.2" lengthAdjust="spacingAndGlyphs" dominant-baseline="central">1708</text><text x="843.2" y="573.6" font-family="Liberation Sans" font-size="9" text-anchor="middle" fill="#dcd400" textLength="12.9" lengthAdjust="spacingAndGlyphs" dominant-baseline="central">552</text><text x="884" y="557" font-family="Liberation Sans" font-size="9" text-anchor="middle" fill="#dcd400" textLength="12.9" lengthAdjust="spacingAndGlyphs" dominant-baseline="central">550</text><text x="844.8" y="494" font-family="Liberation Sans" font-size="9" text-anchor="middle" fill="#dcd400" textLength="17.2" lengthAdjust="spacingAndGlyphs" dominant-baseline="central">1810</text><text x="891.5" y="497" font-family="Liberation Sans" font-size="9" text-anchor="middle" fill="#dcd400" textLength="17.2" lengthAdjust="spacingAndGlyphs" dominant-baseline="central">2506</text><text x="637.7" y="463.6" font-family="Liberation Sans" font-size="9" text-anchor="middle" fill="#dcd400" transform="rotate(-20 637.7 463.6)" textLength="21.5" lengthAdjust="spacingAndGlyphs" dominant-baseline="central">43905</text><text x="791.8" y="427.7" font-family="Liberation Sans" font-size="9" text-anchor="middle" fill="#e07818" textLength="35.2" lengthAdjust="spacingAndGlyphs" dominant-baseline="central">52563693</text><text x="872" y="429.7" font-family="Liberation Sans" font-size="9" text-anchor="middle" fill="#e07818" textLength="35.2" lengthAdjust="spacingAndGlyphs" dominant-baseline="central">52563694</text><text x="599.5" y="460.5" font-family="Liberation Sans" font-size="9" text-anchor="middle" fill="#e07818" transform="rotate(-6 599.5 460.5)" textLength="35.2" lengthAdjust="spacingAndGlyphs" dominant-baseline="central">52563692</text><text x="703.5" y="447.5" font-family="Liberation Sans" font-size="9.5" text-anchor="middle" fill="#b8b8b8" transform="rotate(-15.5 703.5 447.5)" textLength="63" lengthAdjust="spacing" dominant-baseline="central">Magna Aliqua</text><text x="730.5" y="502.2" font-family="Liberation Sans" font-size="9.5" text-anchor="middle" fill="#b8b8b8" transform="rotate(8 730.5 502.2)" textLength="53" lengthAdjust="spacing" dominant-baseline="central">Laboris Nisi</text><text x="492" y="602.2" font-family="Liberation Sans" font-size="8.5" text-anchor="middle" fill="#b82020" transform="rotate(53 492 602.2)" textLength="64" lengthAdjust="spacing" dominant-baseline="central">Minimum Veniam</text><text x="358.5" y="462.1" font-family="Liberation Sans" font-size="8.5" text-anchor="middle" fill="#c02020" dominant-baseline="central">206</text><text x="457.4" y="455.5" font-family="Liberation Sans" font-size="8.5" text-anchor="middle" fill="#c02020" dominant-baseline="central">1009</text><text x="497.3" y="541.4" font-family="Liberation Sans" font-size="8.5" text-anchor="middle" fill="#c02020" dominant-baseline="central">103</text><text x="473.3" y="614.2" font-family="Liberation Sans" font-size="8.5" text-anchor="middle" fill="#c02020" dominant-baseline="central">803</text><text x="556.6" y="606" font-family="Liberation Sans" font-size="8.5" text-anchor="middle" fill="#c02020" dominant-baseline="central">505</text><text x="392" y="514" font-family="Liberation Sans" font-size="8.5" text-anchor="middle" fill="#c02020" dominant-baseline="central">320230</text><path d="M741.3 269.7C757 284 768 308 769.6 336L769.4 340L759.5 422.1M748 269.7C764 285 775 306 776.3 334L776.5 339.6" fill="none" stroke="#d8d8d8" stroke-width="1"/><path d="M700 597.5L706 597.5L709 601.5L709 611L706 615.5L700 615.5L697 611L697 601.5Z" fill="none" stroke="#d8d8d8" stroke-width="1"/><rect x="458.8" y="335.6" width="6.4" height="2.1" fill="#d41a3a"/><rect x="458.8" y="338.3" width="6.4" height="2.1" fill="#d41a3a"/><rect x="458.8" y="341.0" width="6.4" height="2.1" fill="#d41a3a"/><rect x="458.8" y="343.7" width="6.4" height="2.1" fill="#d41a3a"/><rect x="458.8" y="346.4" width="6.4" height="2.1" fill="#d41a3a"/><rect x="458.8" y="349.1" width="6.4" height="2.1" fill="#d41a3a"/><rect x="458.8" y="351.8" width="6.4" height="2.1" fill="#d41a3a"/><rect x="458.5" y="349" width="6.6" height="5.5" fill="#d41a3a"/><rect x="465" y="335.5" width="4.5" height="19" fill="#2088c0" stroke="#8898c8" stroke-width="0.6"/><path d="M468 337v16" stroke="#1010c0" stroke-width="1.2" stroke-dasharray="1.5 1.5"/><rect x="458" y="354.5" width="10" height="3.5" fill="#1010c0"/><path d="M421.3 352.6L436 333M440 327L448.4 316.4" stroke="#d02020" stroke-width="0.9"/><text x="436" y="333" font-family="Liberation Sans" font-size="8" text-anchor="middle" fill="#d02020" transform="rotate(-55 436 333)" dominant-baseline="central">0101</text><rect x="357.25" y="266.75" width="6.5" height="6.5" fill="#d40c34" stroke="#b0a0a8" stroke-width="0.8"/><rect x="368.85" y="266.75" width="6.5" height="6.5" fill="#0808bc" stroke="#8a8ad8" stroke-width="0.8"/><rect x="463.85" y="266.75" width="6.5" height="6.5" fill="#0808bc" stroke="#8a8ad8" stroke-width="0.8"/><rect x="481.95" y="266.75" width="6.5" height="6.5" fill="#d40c34" stroke="#b0a0a8" stroke-width="0.8"/><rect x="493.15" y="266.75" width="6.5" height="6.5" fill="#d40c34" stroke="#b0a0a8" stroke-width="0.8"/><rect x="499.35" y="266.75" width="6.5" height="6.5" fill="#1c8cbc" stroke="#8aa8b8" stroke-width="0.8"/><rect x="507.85" y="267.15" width="6.5" height="6.5" fill="#1c8cbc" stroke="#8aa8b8" stroke-width="0.8"/><rect x="356.35" y="275.15" width="6.5" height="6.5" fill="#1c8cbc" stroke="#8aa8b8" stroke-width="0.8"/><rect x="367.25" y="278.75" width="6.5" height="6.5" fill="#1c8cbc" stroke="#8aa8b8" stroke-width="0.8"/><rect x="455.15" y="282.55" width="6.5" height="6.5" fill="#1c8cbc" stroke="#8aa8b8" stroke-width="0.8"/><rect x="480.35" y="276.05" width="6.5" height="6.5" fill="#d40c34" stroke="#b0a0a8" stroke-width="0.8"/><rect x="488.05" y="276.75" width="6.5" height="6.5" fill="#1c8cbc" stroke="#8aa8b8" stroke-width="0.8"/><rect x="493.95" y="276.75" width="6.5" height="6.5" fill="#0808bc" stroke="#8a8ad8" stroke-width="0.8"/><rect x="481.35" y="282.25" width="6.5" height="6.5" fill="#1c8cbc" stroke="#8aa8b8" stroke-width="0.8"/><rect x="487.05" y="285.65" width="6.5" height="6.5" fill="#1c8cbc" stroke="#8aa8b8" stroke-width="0.8"/><rect x="492.45" y="286.85" width="6.5" height="6.5" fill="#0808bc" stroke="#8a8ad8" stroke-width="0.8"/><rect x="492.45" y="282.25" width="6.5" height="6.5" fill="#1c8cbc" stroke="#8aa8b8" stroke-width="0.8"/><rect x="478.55" y="289.55" width="6.5" height="6.5" fill="#1c8cbc" stroke="#8aa8b8" stroke-width="0.8"/><rect x="480.05" y="294.15" width="6.5" height="6.5" fill="#1c8cbc" stroke="#8aa8b8" stroke-width="0.8"/><rect x="490.55" y="295.25" width="6.5" height="6.5" fill="#1c8cbc" stroke="#8aa8b8" stroke-width="0.8"/><rect x="477.75" y="302.55" width="6.5" height="6.5" fill="#1c8cbc" stroke="#8aa8b8" stroke-width="0.8"/><rect x="483.95" y="302.55" width="6.5" height="6.5" fill="#1c8cbc" stroke="#8aa8b8" stroke-width="0.8"/><rect x="489.65" y="303.75" width="6.5" height="6.5" fill="#0808bc" stroke="#8a8ad8" stroke-width="0.8"/><rect x="475.45" y="312.65" width="6.5" height="6.5" fill="#0808bc" stroke="#8a8ad8" stroke-width="0.8"/><rect x="482.35" y="314.15" width="6.5" height="6.5" fill="#1c8cbc" stroke="#8aa8b8" stroke-width="0.8"/><rect x="488.05" y="314.95" width="6.5" height="6.5" fill="#0808bc" stroke="#8a8ad8" stroke-width="0.8"/><rect x="488.55" y="309.55" width="6.5" height="6.5" fill="#1c8cbc" stroke="#8aa8b8" stroke-width="0.8"/><rect x="468.95" y="321.85" width="6.5" height="6.5" fill="#1c8cbc" stroke="#8aa8b8" stroke-width="0.8"/><rect x="468.55" y="330.35" width="6.5" height="6.5" fill="#0808bc" stroke="#8a8ad8" stroke-width="0.8"/><rect x="472.05" y="312.65" width="6.5" height="6.5" fill="#1c8cbc" stroke="#8aa8b8" stroke-width="0.8"/><rect x="463.15" y="311.85" width="6.5" height="6.5" fill="#0808bc" stroke="#8a8ad8" stroke-width="0.8"/><rect x="458.55" y="311.85" width="6.5" height="6.5" fill="#1c8cbc" stroke="#8aa8b8" stroke-width="0.8"/><rect x="452.35" y="312.65" width="6.5" height="6.5" fill="#1c8cbc" stroke="#8aa8b8" stroke-width="0.8"/><rect x="452.35" y="318.75" width="6.5" height="6.5" fill="#0808bc" stroke="#8a8ad8" stroke-width="0.8"/><rect x="446.95" y="318.05" width="6.5" height="6.5" fill="#1c8cbc" stroke="#8aa8b8" stroke-width="0.8"/><rect x="445.45" y="321.05" width="6.5" height="6.5" fill="#0808bc" stroke="#8a8ad8" stroke-width="0.8"/><rect x="449.25" y="309.55" width="6.5" height="6.5" fill="#1c8cbc" stroke="#8aa8b8" stroke-width="0.8"/><rect x="329.05" y="286.85" width="6.5" height="6.5" fill="#0808bc" stroke="#8a8ad8" stroke-width="0.8"/><rect x="334.05" y="287.45" width="6.5" height="6.5" fill="#1c8cbc" stroke="#8aa8b8" stroke-width="0.8"/><rect x="339.85" y="287.45" width="6.5" height="6.5" fill="#1c8cbc" stroke="#8aa8b8" stroke-width="0.8"/><rect x="346.05" y="284.85" width="6.5" height="6.5" fill="#1c8cbc" stroke="#8aa8b8" stroke-width="0.8"/><rect x="351.45" y="282.55" width="6.5" height="6.5" fill="#1c8cbc" stroke="#8aa8b8" stroke-width="0.8"/><rect x="356.35" y="283.35" width="6.5" height="6.5" fill="#0808bc" stroke="#8a8ad8" stroke-width="0.8"/><rect x="361.45" y="284.15" width="6.5" height="6.5" fill="#1c8cbc" stroke="#8aa8b8" stroke-width="0.8"/><rect x="366.85" y="284.15" width="6.5" height="6.5" fill="#1c8cbc" stroke="#8aa8b8" stroke-width="0.8"/><rect x="366.35" y="290.55" width="6.5" height="6.5" fill="#0808bc" stroke="#8a8ad8" stroke-width="0.8"/><rect x="331.85" y="294.15" width="6.5" height="6.5" fill="#1c8cbc" stroke="#8aa8b8" stroke-width="0.8"/><rect x="343.75" y="296.15" width="6.5" height="6.5" fill="#d40c34" stroke="#b0a0a8" stroke-width="0.8"/><rect x="343.25" y="301.35" width="6.5" height="6.5" fill="#1c8cbc" stroke="#8aa8b8" stroke-width="0.8"/><rect x="334.45" y="299.55" width="6.5" height="6.5" fill="#1c8cbc" stroke="#8aa8b8" stroke-width="0.8"/><rect x="329.85" y="304.95" width="6.5" height="6.5" fill="#d40c34" stroke="#b0a0a8" stroke-width="0.8"/><rect x="336.75" y="305.75" width="6.5" height="6.5" fill="#1c8cbc" stroke="#8aa8b8" stroke-width="0.8"/><rect x="342.15" y="306.45" width="6.5" height="6.5" fill="#0808bc" stroke="#8a8ad8" stroke-width="0.8"/><rect x="406.15" y="294.85" width="6.5" height="6.5" fill="#1c8cbc" stroke="#8aa8b8" stroke-width="0.8"/><rect x="386.85" y="301.05" width="6.5" height="6.5" fill="#1c8cbc" stroke="#8aa8b8" stroke-width="0.8"/><rect x="446.15" y="298.75" width="6.5" height="6.5" fill="#0808bc" stroke="#8a8ad8" stroke-width="0.8"/><rect x="364.25" y="308.45" width="6.5" height="6.5" fill="#1c8cbc" stroke="#8aa8b8" stroke-width="0.8"/><rect x="385.35" y="310.35" width="6.5" height="6.5" fill="#1c8cbc" stroke="#8aa8b8" stroke-width="0.8"/><rect x="401.85" y="311.55" width="6.5" height="6.5" fill="#1c8cbc" stroke="#8aa8b8" stroke-width="0.8"/><rect x="417.65" y="313.35" width="6.5" height="6.5" fill="#0808bc" stroke="#8a8ad8" stroke-width="0.8"/><rect x="430.05" y="304.95" width="6.5" height="6.5" fill="#0808bc" stroke="#8a8ad8" stroke-width="0.8"/><rect x="433.05" y="306.95" width="6.5" height="6.5" fill="#1c8cbc" stroke="#8aa8b8" stroke-width="0.8"/><rect x="441.25" y="307.95" width="6.5" height="6.5" fill="#1c8cbc" stroke="#8aa8b8" stroke-width="0.8"/><rect x="436.95" y="313.35" width="6.5" height="6.5" fill="#1c8cbc" stroke="#8aa8b8" stroke-width="0.8"/><rect x="436.15" y="318.05" width="6.5" height="6.5" fill="#0808bc" stroke="#8a8ad8" stroke-width="0.8"/><rect x="413.85" y="323.85" width="6.5" height="6.5" fill="#1c8cbc" stroke="#8aa8b8" stroke-width="0.8"/><rect x="409.95" y="334.15" width="6.5" height="6.5" fill="#0808bc" stroke="#8a8ad8" stroke-width="0.8"/><rect x="430.75" y="326.45" width="6.5" height="6.5" fill="#1c8cbc" stroke="#8aa8b8" stroke-width="0.8"/><rect x="439.25" y="331.85" width="6.5" height="6.5" fill="#1c8cbc" stroke="#8aa8b8" stroke-width="0.8"/><rect x="430.05" y="336.15" width="6.5" height="6.5" fill="#0808bc" stroke="#8a8ad8" stroke-width="0.8"/><rect x="425.35" y="334.95" width="6.5" height="6.5" fill="#1c8cbc" stroke="#8aa8b8" stroke-width="0.8"/><rect x="436.65" y="337.25" width="6.5" height="6.5" fill="#1c8cbc" stroke="#8aa8b8" stroke-width="0.8"/><rect x="440.05" y="340.35" width="6.5" height="6.5" fill="#1c8cbc" stroke="#8aa8b8" stroke-width="0.8"/><rect x="432.65" y="343.45" width="6.5" height="6.5" fill="#d40c34" stroke="#b0a0a8" stroke-width="0.8"/><rect x="430.05" y="348.55" width="6.5" height="6.5" fill="#1c8cbc" stroke="#8aa8b8" stroke-width="0.8"/><rect x="408.45" y="340.85" width="6.5" height="6.5" fill="#1c8cbc" stroke="#8aa8b8" stroke-width="0.8"/><rect x="394.55" y="343.45" width="6.5" height="6.5" fill="#d40c34" stroke="#b0a0a8" stroke-width="0.8"/><rect x="399.95" y="344.95" width="6.5" height="6.5" fill="#1c8cbc" stroke="#8aa8b8" stroke-width="0.8"/><rect x="406.15" y="346.95" width="6.5" height="6.5" fill="#1c8cbc" stroke="#8aa8b8" stroke-width="0.8"/><rect x="391.45" y="353.75" width="6.5" height="6.5" fill="#1c8cbc" stroke="#8aa8b8" stroke-width="0.8"/><rect x="380.65" y="351.55" width="6.5" height="6.5" fill="#0808bc" stroke="#8a8ad8" stroke-width="0.8"/><rect x="415.35" y="353.45" width="6.5" height="6.5" fill="#0808bc" stroke="#8a8ad8" stroke-width="0.8"/><rect x="426.95" y="353.45" width="6.5" height="6.5" fill="#0808bc" stroke="#8a8ad8" stroke-width="0.8"/><rect x="409.15" y="354.25" width="6.5" height="6.5" fill="#1c8cbc" stroke="#8aa8b8" stroke-width="0.8"/><rect x="403.05" y="358.05" width="6.5" height="6.5" fill="#1c8cbc" stroke="#8aa8b8" stroke-width="0.8"/><rect x="412.25" y="360.35" width="6.5" height="6.5" fill="#1c8cbc" stroke="#8aa8b8" stroke-width="0.8"/><rect x="400.75" y="361.45" width="6.5" height="6.5" fill="#1c8cbc" stroke="#8aa8b8" stroke-width="0.8"/><rect x="423.05" y="361.45" width="6.5" height="6.5" fill="#1c8cbc" stroke="#8aa8b8" stroke-width="0.8"/><rect x="379.15" y="366.55" width="6.5" height="6.5" fill="#1c8cbc" stroke="#8aa8b8" stroke-width="0.8"/><rect x="386.85" y="365.45" width="6.5" height="6.5" fill="#0808bc" stroke="#8a8ad8" stroke-width="0.8"/><rect x="393.05" y="367.35" width="6.5" height="6.5" fill="#1c8cbc" stroke="#8aa8b8" stroke-width="0.8"/><rect x="399.15" y="369.65" width="6.5" height="6.5" fill="#0808bc" stroke="#8a8ad8" stroke-width="0.8"/><rect x="409.15" y="366.05" width="6.5" height="6.5" fill="#0808bc" stroke="#8a8ad8" stroke-width="0.8"/><rect x="419.25" y="369.65" width="6.5" height="6.5" fill="#0808bc" stroke="#8a8ad8" stroke-width="0.8"/><rect x="406.85" y="373.75" width="6.5" height="6.5" fill="#1c8cbc" stroke="#8aa8b8" stroke-width="0.8"/><rect x="416.95" y="377.35" width="6.5" height="6.5" fill="#1c8cbc" stroke="#8aa8b8" stroke-width="0.8"/><rect x="383.75" y="373.45" width="6.5" height="6.5" fill="#1c8cbc" stroke="#8aa8b8" stroke-width="0.8"/><rect x="396.15" y="378.05" width="6.5" height="6.5" fill="#1c8cbc" stroke="#8aa8b8" stroke-width="0.8"/><rect x="404.55" y="379.65" width="6.5" height="6.5" fill="#0808bc" stroke="#8a8ad8" stroke-width="0.8"/><rect x="329.35" y="376.25" width="6.5" height="6.5" fill="#0808bc" stroke="#8a8ad8" stroke-width="0.8"/><rect x="353.45" y="378.85" width="6.5" height="6.5" fill="#1c8cbc" stroke="#8aa8b8" stroke-width="0.8"/><rect x="378.05" y="380.85" width="6.5" height="6.5" fill="#0808bc" stroke="#8a8ad8" stroke-width="0.8"/><rect x="429.25" y="374.25" width="6.5" height="6.5" fill="#0808bc" stroke="#8a8ad8" stroke-width="0.8"/><rect x="434.15" y="375.05" width="6.5" height="6.5" fill="#1c8cbc" stroke="#8aa8b8" stroke-width="0.8"/><rect x="440.05" y="375.05" width="6.5" height="6.5" fill="#0808bc" stroke="#8a8ad8" stroke-width="0.8"/><rect x="513.95" y="358.05" width="6.5" height="6.5" fill="#d40c34" stroke="#b0a0a8" stroke-width="0.8"/><rect x="512.45" y="364.25" width="6.5" height="6.5" fill="#1c8cbc" stroke="#8aa8b8" stroke-width="0.8"/><rect x="511.65" y="369.65" width="6.5" height="6.5" fill="#1c8cbc" stroke="#8aa8b8" stroke-width="0.8"/><rect x="510.15" y="376.55" width="6.5" height="6.5" fill="#1c8cbc" stroke="#8aa8b8" stroke-width="0.8"/><rect x="472.35" y="353.15" width="6.5" height="6.5" fill="#1c8cbc" stroke="#8aa8b8" stroke-width="0.8"/><rect x="481.95" y="354.65" width="6.5" height="6.5" fill="#0808bc" stroke="#8a8ad8" stroke-width="0.8"/><rect x="480.35" y="368.05" width="6.5" height="6.5" fill="#1c8cbc" stroke="#8aa8b8" stroke-width="0.8"/><rect x="499.35" y="334.65" width="6.5" height="6.5" fill="#1c8cbc" stroke="#8aa8b8" stroke-width="0.8"/><rect x="509.65" y="339.25" width="6.5" height="6.5" fill="#1c8cbc" stroke="#8aa8b8" stroke-width="0.8"/><rect x="448.45" y="334.15" width="6.5" height="6.5" fill="#1c8cbc" stroke="#8aa8b8" stroke-width="0.8"/><rect x="444.65" y="350.35" width="6.5" height="6.5" fill="#0808bc" stroke="#8a8ad8" stroke-width="0.8"/><rect x="450.45" y="351.15" width="6.5" height="6.5" fill="#1c8cbc" stroke="#8aa8b8" stroke-width="0.8"/><rect x="443.85" y="355.75" width="6.5" height="6.5" fill="#1c8cbc" stroke="#8aa8b8" stroke-width="0.8"/><rect x="441.55" y="361.15" width="6.5" height="6.5" fill="#1c8cbc" stroke="#8aa8b8" stroke-width="0.8"/><rect x="440.05" y="368.05" width="6.5" height="6.5" fill="#1c8cbc" stroke="#8aa8b8" stroke-width="0.8"/><rect x="548.05" y="275.15" width="6.5" height="6.5" fill="#1c8cbc" stroke="#8aa8b8" stroke-width="0.8"/><rect x="596.55" y="266.75" width="6.5" height="6.5" fill="#d40c34" stroke="#b0a0a8" stroke-width="0.8"/><rect x="596.15" y="271.45" width="6.5" height="6.5" fill="#1c8cbc" stroke="#8aa8b8" stroke-width="0.8"/><rect x="592.25" y="276.45" width="6.5" height="6.5" fill="#1c8cbc" stroke="#8aa8b8" stroke-width="0.8"/><rect x="598.45" y="278.25" width="6.5" height="6.5" fill="#1c8cbc" stroke="#8aa8b8" stroke-width="0.8"/><rect x="587.95" y="280.25" width="6.5" height="6.5" fill="#0808bc" stroke="#8a8ad8" stroke-width="0.8"/><rect x="594.55" y="282.25" width="6.5" height="6.5" fill="#d40c34" stroke="#b0a0a8" stroke-width="0.8"/><rect x="604.25" y="280.25" width="6.5" height="6.5" fill="#0808bc" stroke="#8a8ad8" stroke-width="0.8"/><rect x="604.95" y="286.45" width="6.5" height="6.5" fill="#1c8cbc" stroke="#8aa8b8" stroke-width="0.8"/><rect x="595.35" y="287.65" width="6.5" height="6.5" fill="#1c8cbc" stroke="#8aa8b8" stroke-width="0.8"/><rect x="599.65" y="289.55" width="6.5" height="6.5" fill="#0808bc" stroke="#8a8ad8" stroke-width="0.8"/><rect x="532.95" y="323.85" width="6.5" height="6.5" fill="#0808bc" stroke="#8a8ad8" stroke-width="0.8"/><rect x="556.85" y="326.75" width="6.5" height="6.5" fill="#1c8cbc" stroke="#8aa8b8" stroke-width="0.8"/><rect x="581.15" y="329.55" width="6.5" height="6.5" fill="#0808bc" stroke="#8a8ad8" stroke-width="0.8"/><rect x="532.15" y="331.15" width="6.5" height="6.5" fill="#1c8cbc" stroke="#8aa8b8" stroke-width="0.8"/><rect x="531.45" y="338.45" width="6.5" height="6.5" fill="#0808bc" stroke="#8a8ad8" stroke-width="0.8"/><rect x="554.95" y="343.45" width="6.5" height="6.5" fill="#0808bc" stroke="#8a8ad8" stroke-width="0.8"/><rect x="554.55" y="348.05" width="6.5" height="6.5" fill="#1c8cbc" stroke="#8aa8b8" stroke-width="0.8"/><rect x="554.25" y="351.95" width="6.5" height="6.5" fill="#0808bc" stroke="#8a8ad8" stroke-width="0.8"/><rect x="566.35" y="352.25" width="6.5" height="6.5" fill="#1c8cbc" stroke="#8aa8b8" stroke-width="0.8"/><rect x="578.45" y="353.75" width="6.5" height="6.5" fill="#0808bc" stroke="#8a8ad8" stroke-width="0.8"/><rect x="579.95" y="341.55" width="6.5" height="6.5" fill="#1c8cbc" stroke="#8aa8b8" stroke-width="0.8"/><rect x="532.95" y="360.85" width="6.5" height="6.5" fill="#1c8cbc" stroke="#8aa8b8" stroke-width="0.8"/><rect x="551.45" y="362.65" width="6.5" height="6.5" fill="#0808bc" stroke="#8a8ad8" stroke-width="0.8"/><rect x="549.95" y="376.25" width="6.5" height="6.5" fill="#1c8cbc" stroke="#8aa8b8" stroke-width="0.8"/><rect x="498.65" y="382.55" width="6.5" height="6.5" fill="#0808bc" stroke="#8a8ad8" stroke-width="0.8"/><rect x="504.25" y="383.05" width="6.5" height="6.5" fill="#1c8cbc" stroke="#8aa8b8" stroke-width="0.8"/><rect x="509.85" y="383.85" width="6.5" height="6.5" fill="#0808bc" stroke="#8a8ad8" stroke-width="0.8"/><rect x="498.95" y="390.35" width="6.5" height="6.5" fill="#1c8cbc" stroke="#8aa8b8" stroke-width="0.8"/><rect x="498.95" y="398.05" width="6.5" height="6.5" fill="#0808bc" stroke="#8a8ad8" stroke-width="0.8"/><rect x="498.65" y="403.95" width="6.5" height="6.5" fill="#1c8cbc" stroke="#8aa8b8" stroke-width="0.8"/><rect x="498.65" y="410.25" width="6.5" height="6.5" fill="#1c8cbc" stroke="#8aa8b8" stroke-width="0.8"/><rect x="498.25" y="416.45" width="6.5" height="6.5" fill="#1c8cbc" stroke="#8aa8b8" stroke-width="0.8"/><rect x="497.95" y="422.35" width="6.5" height="6.5" fill="#0808bc" stroke="#8a8ad8" stroke-width="0.8"/><rect x="545.85" y="389.05" width="6.5" height="6.5" fill="#1c8cbc" stroke="#8aa8b8" stroke-width="0.8"/><rect x="542.15" y="390.55" width="6.5" height="6.5" fill="#1c8cbc" stroke="#8aa8b8" stroke-width="0.8"/><rect x="549.65" y="389.65" width="6.5" height="6.5" fill="#0808bc" stroke="#8a8ad8" stroke-width="0.8"/><rect x="541.75" y="396.25" width="6.5" height="6.5" fill="#1c8cbc" stroke="#8aa8b8" stroke-width="0.8"/><rect x="541.25" y="400.55" width="6.5" height="6.5" fill="#0808bc" stroke="#8a8ad8" stroke-width="0.8"/><rect x="539.65" y="412.65" width="6.5" height="6.5" fill="#1c8cbc" stroke="#8aa8b8" stroke-width="0.8"/><rect x="504.85" y="424.15" width="6.5" height="6.5" fill="#1c8cbc" stroke="#8aa8b8" stroke-width="0.8"/><rect x="512.95" y="425.15" width="6.5" height="6.5" fill="#d40c34" stroke="#b0a0a8" stroke-width="0.8"/><rect x="519.15" y="424.55" width="6.5" height="6.5" fill="#1c8cbc" stroke="#8aa8b8" stroke-width="0.8"/><rect x="527.85" y="425.15" width="6.5" height="6.5" fill="#1c8cbc" stroke="#8aa8b8" stroke-width="0.8"/><rect x="537.15" y="425.15" width="6.5" height="6.5" fill="#0808bc" stroke="#8a8ad8" stroke-width="0.8"/><rect x="512.65" y="430.15" width="6.5" height="6.5" fill="#1c8cbc" stroke="#8aa8b8" stroke-width="0.8"/><rect x="512.25" y="432.85" width="6.5" height="6.5" fill="#0808bc" stroke="#8a8ad8" stroke-width="0.8"/><rect x="524.35" y="432.35" width="6.5" height="6.5" fill="#1c8cbc" stroke="#8aa8b8" stroke-width="0.8"/><rect x="536.55" y="430.15" width="6.5" height="6.5" fill="#1c8cbc" stroke="#8aa8b8" stroke-width="0.8"/><rect x="536.35" y="434.85" width="6.5" height="6.5" fill="#0808bc" stroke="#8a8ad8" stroke-width="0.8"/><rect x="560.85" y="405.25" width="6.5" height="6.5" fill="#d40c34" stroke="#b0a0a8" stroke-width="0.8"/><rect x="565.75" y="405.85" width="6.5" height="6.5" fill="#1c8cbc" stroke="#8aa8b8" stroke-width="0.8"/><rect x="568.65" y="405.85" width="6.5" height="6.5" fill="#0808bc" stroke="#8a8ad8" stroke-width="0.8"/><rect x="566.65" y="412.45" width="6.5" height="6.5" fill="#1c8cbc" stroke="#8aa8b8" stroke-width="0.8"/><rect x="559.15" y="417.45" width="6.5" height="6.5" fill="#1c8cbc" stroke="#8aa8b8" stroke-width="0.8"/><rect x="567.05" y="418.95" width="6.5" height="6.5" fill="#1c8cbc" stroke="#8aa8b8" stroke-width="0.8"/><rect x="567.05" y="424.85" width="6.5" height="6.5" fill="#1c8cbc" stroke="#8aa8b8" stroke-width="0.8"/><rect x="557.05" y="429.15" width="6.5" height="6.5" fill="#0808bc" stroke="#8a8ad8" stroke-width="0.8"/><rect x="562.05" y="430.15" width="6.5" height="6.5" fill="#1c8cbc" stroke="#8aa8b8" stroke-width="0.8"/><rect x="567.05" y="430.35" width="6.5" height="6.5" fill="#0808bc" stroke="#8a8ad8" stroke-width="0.8"/><rect x="582.55" y="433.25" width="6.5" height="6.5" fill="#d40c34" stroke="#b0a0a8" stroke-width="0.8"/><rect x="588.75" y="432.55" width="6.5" height="6.5" fill="#1c8cbc" stroke="#8aa8b8" stroke-width="0.8"/><rect x="597.45" y="433.25" width="6.5" height="6.5" fill="#1c8cbc" stroke="#8aa8b8" stroke-width="0.8"/><rect x="606.45" y="433.25" width="6.5" height="6.5" fill="#0808bc" stroke="#8a8ad8" stroke-width="0.8"/><rect x="581.95" y="440.35" width="6.5" height="6.5" fill="#0808bc" stroke="#8a8ad8" stroke-width="0.8"/><rect x="593.75" y="440.35" width="6.5" height="6.5" fill="#1c8cbc" stroke="#8aa8b8" stroke-width="0.8"/><rect x="606.25" y="438.15" width="6.5" height="6.5" fill="#1c8cbc" stroke="#8aa8b8" stroke-width="0.8"/><rect x="605.95" y="443.15" width="6.5" height="6.5" fill="#0808bc" stroke="#8a8ad8" stroke-width="0.8"/><rect x="575.45" y="465.95" width="6.5" height="6.5" fill="#1c8cbc" stroke="#8aa8b8" stroke-width="0.8"/><rect x="606.55" y="472.75" width="6.5" height="6.5" fill="#1c8cbc" stroke="#8aa8b8" stroke-width="0.8"/><rect x="606.55" y="479.55" width="6.5" height="6.5" fill="#1c8cbc" stroke="#8aa8b8" stroke-width="0.8"/><rect x="581.05" y="478.95" width="6.5" height="6.5" fill="#1c8cbc" stroke="#8aa8b8" stroke-width="0.8"/><rect x="587.85" y="477.75" width="6.5" height="6.5" fill="#1c8cbc" stroke="#8aa8b8" stroke-width="0.8"/><rect x="580.35" y="486.15" width="6.5" height="6.5" fill="#0808bc" stroke="#8a8ad8" stroke-width="0.8"/><rect x="570.65" y="484.55" width="6.5" height="6.5" fill="#1c8cbc" stroke="#8aa8b8" stroke-width="0.8"/><rect x="561.45" y="483.65" width="6.5" height="6.5" fill="#0808bc" stroke="#8a8ad8" stroke-width="0.8"/><rect x="562.95" y="501.95" width="6.5" height="6.5" fill="#1c8cbc" stroke="#8aa8b8" stroke-width="0.8"/><rect x="568.95" y="502.85" width="6.5" height="6.5" fill="#0808bc" stroke="#8a8ad8" stroke-width="0.8"/><rect x="557.95" y="503.85" width="6.5" height="6.5" fill="#1c8cbc" stroke="#8aa8b8" stroke-width="0.8"/><rect x="578.15" y="506.35" width="6.5" height="6.5" fill="#1c8cbc" stroke="#8aa8b8" stroke-width="0.8"/><rect x="567.75" y="511.95" width="6.5" height="6.5" fill="#1c8cbc" stroke="#8aa8b8" stroke-width="0.8"/><rect x="561.45" y="520.65" width="6.5" height="6.5" fill="#1c8cbc" stroke="#8aa8b8" stroke-width="0.8"/><rect x="566.95" y="521.25" width="6.5" height="6.5" fill="#0808bc" stroke="#8a8ad8" stroke-width="0.8"/><rect x="576.05" y="525.65" width="6.5" height="6.5" fill="#0808bc" stroke="#8a8ad8" stroke-width="0.8"/><rect x="381.15" y="381.75" width="6.5" height="6.5" fill="#0808bc" stroke="#8a8ad8" stroke-width="0.8"/><rect x="386.85" y="384.05" width="6.5" height="6.5" fill="#1c8cbc" stroke="#8aa8b8" stroke-width="0.8"/><rect x="393.05" y="386.35" width="6.5" height="6.5" fill="#0808bc" stroke="#8a8ad8" stroke-width="0.8"/><rect x="429.25" y="382.25" width="6.5" height="6.5" fill="#1c8cbc" stroke="#8aa8b8" stroke-width="0.8"/><rect x="413.85" y="386.35" width="6.5" height="6.5" fill="#0808bc" stroke="#8a8ad8" stroke-width="0.8"/><rect x="421.55" y="389.05" width="6.5" height="6.5" fill="#d40c34" stroke="#b0a0a8" stroke-width="0.8"/><rect x="427.65" y="389.45" width="6.5" height="6.5" fill="#1c8cbc" stroke="#8aa8b8" stroke-width="0.8"/><rect x="329.85" y="387.15" width="6.5" height="6.5" fill="#d40c34" stroke="#b0a0a8" stroke-width="0.8"/><rect x="359.55" y="391.05" width="6.5" height="6.5" fill="#1c8cbc" stroke="#8aa8b8" stroke-width="0.8"/><rect x="389.95" y="394.85" width="6.5" height="6.5" fill="#0808bc" stroke="#8a8ad8" stroke-width="0.8"/><rect x="395.65" y="394.85" width="6.5" height="6.5" fill="#1c8cbc" stroke="#8aa8b8" stroke-width="0.8"/><rect x="401.15" y="395.65" width="6.5" height="6.5" fill="#0808bc" stroke="#8a8ad8" stroke-width="0.8"/><rect x="403.05" y="388.35" width="6.5" height="6.5" fill="#1c8cbc" stroke="#8aa8b8" stroke-width="0.8"/><rect x="411.95" y="395.15" width="6.5" height="6.5" fill="#1c8cbc" stroke="#8aa8b8" stroke-width="0.8"/><rect x="426.95" y="395.65" width="6.5" height="6.5" fill="#1c8cbc" stroke="#8aa8b8" stroke-width="0.8"/><rect x="389.15" y="401.05" width="6.5" height="6.5" fill="#1c8cbc" stroke="#8aa8b8" stroke-width="0.8"/><rect x="394.55" y="401.75" width="6.5" height="6.5" fill="#0808bc" stroke="#8a8ad8" stroke-width="0.8"/><rect x="399.95" y="402.55" width="6.5" height="6.5" fill="#1c8cbc" stroke="#8aa8b8" stroke-width="0.8"/><rect x="409.95" y="404.15" width="6.5" height="6.5" fill="#0808bc" stroke="#8a8ad8" stroke-width="0.8"/><rect x="419.95" y="401.05" width="6.5" height="6.5" fill="#1c8cbc" stroke="#8aa8b8" stroke-width="0.8"/><rect x="427.65" y="401.75" width="6.5" height="6.5" fill="#1c8cbc" stroke="#8aa8b8" stroke-width="0.8"/><rect x="388.35" y="407.95" width="6.5" height="6.5" fill="#0808bc" stroke="#8a8ad8" stroke-width="0.8"/><rect x="393.75" y="407.95" width="6.5" height="6.5" fill="#1c8cbc" stroke="#8aa8b8" stroke-width="0.8"/><rect x="399.15" y="409.05" width="6.5" height="6.5" fill="#0808bc" stroke="#8a8ad8" stroke-width="0.8"/><rect x="408.85" y="411.05" width="6.5" height="6.5" fill="#1c8cbc" stroke="#8aa8b8" stroke-width="0.8"/><rect x="427.95" y="408.45" width="6.5" height="6.5" fill="#1c8cbc" stroke="#8aa8b8" stroke-width="0.8"/><rect x="345.25" y="404.15" width="6.5" height="6.5" fill="#d40c34" stroke="#b0a0a8" stroke-width="0.8"/><rect x="344.45" y="410.55" width="6.5" height="6.5" fill="#d40c34" stroke="#b0a0a8" stroke-width="0.8"/><rect x="366.85" y="405.65" width="6.5" height="6.5" fill="#1c8cbc" stroke="#8aa8b8" stroke-width="0.8"/><rect x="360.25" y="412.15" width="6.5" height="6.5" fill="#1c8cbc" stroke="#8aa8b8" stroke-width="0.8"/><rect x="376.05" y="413.35" width="6.5" height="6.5" fill="#0808bc" stroke="#8a8ad8" stroke-width="0.8"/><rect x="408.85" y="416.45" width="6.5" height="6.5" fill="#1c8cbc" stroke="#8aa8b8" stroke-width="0.8"/><rect x="407.95" y="421.35" width="6.5" height="6.5" fill="#0808bc" stroke="#8a8ad8" stroke-width="0.8"/><rect x="417.65" y="413.05" width="6.5" height="6.5" fill="#0808bc" stroke="#8a8ad8" stroke-width="0.8"/><rect x="423.05" y="413.35" width="6.5" height="6.5" fill="#1c8cbc" stroke="#8aa8b8" stroke-width="0.8"/><rect x="427.65" y="413.65" width="6.5" height="6.5" fill="#0808bc" stroke="#8a8ad8" stroke-width="0.8"/><rect x="435.05" y="416.45" width="6.5" height="6.5" fill="#1c8cbc" stroke="#8aa8b8" stroke-width="0.8"/><rect x="443.45" y="417.25" width="6.5" height="6.5" fill="#d40c34" stroke="#b0a0a8" stroke-width="0.8"/><rect x="449.55" y="416.75" width="6.5" height="6.5" fill="#1c8cbc" stroke="#8aa8b8" stroke-width="0.8"/><rect x="458.85" y="416.75" width="6.5" height="6.5" fill="#1c8cbc" stroke="#8aa8b8" stroke-width="0.8"/><rect x="467.75" y="417.25" width="6.5" height="6.5" fill="#0808bc" stroke="#8a8ad8" stroke-width="0.8"/><rect x="466.95" y="421.85" width="6.5" height="6.5" fill="#1c8cbc" stroke="#8aa8b8" stroke-width="0.8"/><rect x="466.25" y="426.45" width="6.5" height="6.5" fill="#0808bc" stroke="#8a8ad8" stroke-width="0.8"/><rect x="473.15" y="427.55" width="6.5" height="6.5" fill="#0808bc" stroke="#8a8ad8" stroke-width="0.8"/><rect x="454.65" y="424.15" width="6.5" height="6.5" fill="#1c8cbc" stroke="#8aa8b8" stroke-width="0.8"/><rect x="443.05" y="421.85" width="6.5" height="6.5" fill="#1c8cbc" stroke="#8aa8b8" stroke-width="0.8"/><rect x="443.05" y="424.95" width="6.5" height="6.5" fill="#0808bc" stroke="#8a8ad8" stroke-width="0.8"/><rect x="440.05" y="423.85" width="6.5" height="6.5" fill="#1c8cbc" stroke="#8aa8b8" stroke-width="0.8"/><rect x="343.75" y="423.35" width="6.5" height="6.5" fill="#1c8cbc" stroke="#8aa8b8" stroke-width="0.8"/><rect x="374.55" y="425.95" width="6.5" height="6.5" fill="#1c8cbc" stroke="#8aa8b8" stroke-width="0.8"/><rect x="396.55" y="430.35" width="6.5" height="6.5" fill="#1c8cbc" stroke="#8aa8b8" stroke-width="0.8"/><rect x="406.85" y="427.95" width="6.5" height="6.5" fill="#0808bc" stroke="#8a8ad8" stroke-width="0.8"/><rect x="400.75" y="438.75" width="6.5" height="6.5" fill="#0808bc" stroke="#8a8ad8" stroke-width="0.8"/><rect x="404.85" y="443.35" width="6.5" height="6.5" fill="#1c8cbc" stroke="#8aa8b8" stroke-width="0.8"/><rect x="342.15" y="436.15" width="6.5" height="6.5" fill="#0808bc" stroke="#8a8ad8" stroke-width="0.8"/><rect x="350.95" y="436.75" width="6.5" height="6.5" fill="#d40c34" stroke="#b0a0a8" stroke-width="0.8"/><rect x="357.55" y="437.25" width="6.5" height="6.5" fill="#1c8cbc" stroke="#8aa8b8" stroke-width="0.8"/><rect x="364.85" y="437.25" width="6.5" height="6.5" fill="#0808bc" stroke="#8a8ad8" stroke-width="0.8"/><rect x="374.05" y="438.75" width="6.5" height="6.5" fill="#0808bc" stroke="#8a8ad8" stroke-width="0.8"/><rect x="350.65" y="442.95" width="6.5" height="6.5" fill="#1c8cbc" stroke="#8aa8b8" stroke-width="0.8"/><rect x="350.35" y="445.35" width="6.5" height="6.5" fill="#0808bc" stroke="#8a8ad8" stroke-width="0.8"/><rect x="357.55" y="444.15" width="6.5" height="6.5" fill="#1c8cbc" stroke="#8aa8b8" stroke-width="0.8"/><rect x="365.25" y="441.85" width="6.5" height="6.5" fill="#1c8cbc" stroke="#8aa8b8" stroke-width="0.8"/><rect x="364.85" y="446.45" width="6.5" height="6.5" fill="#0808bc" stroke="#8a8ad8" stroke-width="0.8"/><rect x="373.75" y="444.15" width="6.5" height="6.5" fill="#1c8cbc" stroke="#8aa8b8" stroke-width="0.8"/><rect x="372.95" y="448.75" width="6.5" height="6.5" fill="#0808bc" stroke="#8a8ad8" stroke-width="0.8"/><rect x="383.75" y="449.15" width="6.5" height="6.5" fill="#1c8cbc" stroke="#8aa8b8" stroke-width="0.8"/><rect x="393.75" y="451.85" width="6.5" height="6.5" fill="#0808bc" stroke="#8a8ad8" stroke-width="0.8"/><rect x="470.85" y="378.65" width="6.5" height="6.5" fill="#1c8cbc" stroke="#8aa8b8" stroke-width="0.8"/><rect x="476.95" y="381.35" width="6.5" height="6.5" fill="#1c8cbc" stroke="#8aa8b8" stroke-width="0.8"/><rect x="480.05" y="381.35" width="6.5" height="6.5" fill="#0808bc" stroke="#8a8ad8" stroke-width="0.8"/><rect x="472.65" y="382.85" width="6.5" height="6.5" fill="#1c8cbc" stroke="#8aa8b8" stroke-width="0.8"/><rect x="470.85" y="391.05" width="6.5" height="6.5" fill="#0808bc" stroke="#8a8ad8" stroke-width="0.8"/><rect x="474.65" y="391.45" width="6.5" height="6.5" fill="#1c8cbc" stroke="#8aa8b8" stroke-width="0.8"/><rect x="478.85" y="391.75" width="6.5" height="6.5" fill="#0808bc" stroke="#8a8ad8" stroke-width="0.8"/><rect x="470.05" y="404.15" width="6.5" height="6.5" fill="#1c8cbc" stroke="#8aa8b8" stroke-width="0.8"/><rect x="475.45" y="409.55" width="6.5" height="6.5" fill="#1c8cbc" stroke="#8aa8b8" stroke-width="0.8"/><rect x="490.85" y="397.65" width="6.5" height="6.5" fill="#d40c34" stroke="#b0a0a8" stroke-width="0.8"/><rect x="497.05" y="397.95" width="6.5" height="6.5" fill="#1c8cbc" stroke="#8aa8b8" stroke-width="0.8"/><rect x="489.35" y="409.55" width="6.5" height="6.5" fill="#1c8cbc" stroke="#8aa8b8" stroke-width="0.8"/><rect x="487.45" y="421.05" width="6.5" height="6.5" fill="#0808bc" stroke="#8a8ad8" stroke-width="0.8"/><rect x="492.45" y="421.85" width="6.5" height="6.5" fill="#1c8cbc" stroke="#8aa8b8" stroke-width="0.8"/><rect x="473.15" y="483.95" width="6.5" height="6.5" fill="#1c8cbc" stroke="#8aa8b8" stroke-width="0.8"/><rect x="461.55" y="486.55" width="6.5" height="6.5" fill="#0808bc" stroke="#8a8ad8" stroke-width="0.8"/><rect x="448.95" y="490.35" width="6.5" height="6.5" fill="#1c8cbc" stroke="#8aa8b8" stroke-width="0.8"/><rect x="484.75" y="481.15" width="6.5" height="6.5" fill="#0808bc" stroke="#8a8ad8" stroke-width="0.8"/><rect x="483.95" y="473.45" width="6.5" height="6.5" fill="#1c8cbc" stroke="#8aa8b8" stroke-width="0.8"/><rect x="482.85" y="466.95" width="6.5" height="6.5" fill="#0808bc" stroke="#8a8ad8" stroke-width="0.8"/><rect x="460.85" y="465.45" width="6.5" height="6.5" fill="#1c8cbc" stroke="#8aa8b8" stroke-width="0.8"/><rect x="438.45" y="464.15" width="6.5" height="6.5" fill="#0808bc" stroke="#8a8ad8" stroke-width="0.8"/><rect x="427.95" y="463.85" width="6.5" height="6.5" fill="#1c8cbc" stroke="#8aa8b8" stroke-width="0.8"/><rect x="417.65" y="460.85" width="6.5" height="6.5" fill="#1c8cbc" stroke="#8aa8b8" stroke-width="0.8"/><rect x="416.95" y="457.25" width="6.5" height="6.5" fill="#0808bc" stroke="#8a8ad8" stroke-width="0.8"/><rect x="410.45" y="459.25" width="6.5" height="6.5" fill="#1c8cbc" stroke="#8aa8b8" stroke-width="0.8"/><rect x="403.05" y="459.25" width="6.5" height="6.5" fill="#0808bc" stroke="#8a8ad8" stroke-width="0.8"/><rect x="401.45" y="471.15" width="6.5" height="6.5" fill="#1c8cbc" stroke="#8aa8b8" stroke-width="0.8"/><rect x="401.75" y="475.25" width="6.5" height="6.5" fill="#1c8cbc" stroke="#8aa8b8" stroke-width="0.8"/><rect x="392.25" y="469.55" width="6.5" height="6.5" fill="#1c8cbc" stroke="#8aa8b8" stroke-width="0.8"/><rect x="437.75" y="477.25" width="6.5" height="6.5" fill="#1c8cbc" stroke="#8aa8b8" stroke-width="0.8"/><rect x="436.95" y="490.05" width="6.5" height="6.5" fill="#0808bc" stroke="#8a8ad8" stroke-width="0.8"/><rect x="419.65" y="489.15" width="6.5" height="6.5" fill="#1c8cbc" stroke="#8aa8b8" stroke-width="0.8"/><rect x="401.15" y="487.05" width="6.5" height="6.5" fill="#d40c34" stroke="#b0a0a8" stroke-width="0.8"/><rect x="390.45" y="486.55" width="6.5" height="6.5" fill="#0808bc" stroke="#8a8ad8" stroke-width="0.8"/><rect x="387.65" y="491.15" width="6.5" height="6.5" fill="#1c8cbc" stroke="#8aa8b8" stroke-width="0.8"/><rect x="382.25" y="493.45" width="6.5" height="6.5" fill="#0808bc" stroke="#8a8ad8" stroke-width="0.8"/><rect x="393.75" y="494.25" width="6.5" height="6.5" fill="#1c8cbc" stroke="#8aa8b8" stroke-width="0.8"/><rect x="402.25" y="492.25" width="6.5" height="6.5" fill="#1c8cbc" stroke="#8aa8b8" stroke-width="0.8"/><rect x="410.75" y="495.05" width="6.5" height="6.5" fill="#1c8cbc" stroke="#8aa8b8" stroke-width="0.8"/><rect x="417.25" y="495.05" width="6.5" height="6.5" fill="#0808bc" stroke="#8a8ad8" stroke-width="0.8"/><rect x="426.45" y="495.05" width="6.5" height="6.5" fill="#1c8cbc" stroke="#8aa8b8" stroke-width="0.8"/><rect x="436.15" y="495.05" width="6.5" height="6.5" fill="#0808bc" stroke="#8a8ad8" stroke-width="0.8"/><rect x="403.85" y="495.05" width="6.5" height="6.5" fill="#0808bc" stroke="#8a8ad8" stroke-width="0.8"/><rect x="329.85" y="485.75" width="6.5" height="6.5" fill="#d40c34" stroke="#b0a0a8" stroke-width="0.8"/><rect x="335.25" y="485.05" width="6.5" height="6.5" fill="#1c8cbc" stroke="#8aa8b8" stroke-width="0.8"/><rect x="329.35" y="495.75" width="6.5" height="6.5" fill="#0808bc" stroke="#8a8ad8" stroke-width="0.8"/><rect x="335.25" y="497.75" width="6.5" height="6.5" fill="#1c8cbc" stroke="#8aa8b8" stroke-width="0.8"/><rect x="340.65" y="498.85" width="6.5" height="6.5" fill="#0808bc" stroke="#8a8ad8" stroke-width="0.8"/><rect x="356.05" y="489.65" width="6.5" height="6.5" fill="#1c8cbc" stroke="#8aa8b8" stroke-width="0.8"/><rect x="359.85" y="489.65" width="6.5" height="6.5" fill="#1c8cbc" stroke="#8aa8b8" stroke-width="0.8"/><rect x="453.85" y="452.15" width="6.5" height="6.5" fill="#0808bc" stroke="#8a8ad8" stroke-width="0.8"/><rect x="355.25" y="458.85" width="6.5" height="6.5" fill="#0808bc" stroke="#8a8ad8" stroke-width="0.8"/><rect x="473.65" y="504.15" width="6.5" height="6.5" fill="#0808bc" stroke="#8a8ad8" stroke-width="0.8"/><rect x="464.35" y="507.75" width="6.5" height="6.5" fill="#1c8cbc" stroke="#8aa8b8" stroke-width="0.8"/><rect x="456.55" y="513.45" width="6.5" height="6.5" fill="#d40c34" stroke="#b0a0a8" stroke-width="0.8"/><rect x="452.05" y="523.15" width="6.5" height="6.5" fill="#1c8cbc" stroke="#8aa8b8" stroke-width="0.8"/><rect x="453.05" y="532.65" width="6.5" height="6.5" fill="#0808bc" stroke="#8a8ad8" stroke-width="0.8"/><rect x="517.45" y="494.25" width="6.5" height="6.5" fill="#1c8cbc" stroke="#8aa8b8" stroke-width="0.8"/><rect x="540.15" y="488.55" width="6.5" height="6.5" fill="#d40c34" stroke="#b0a0a8" stroke-width="0.8"/><rect x="550.45" y="486.15" width="6.5" height="6.5" fill="#1c8cbc" stroke="#8aa8b8" stroke-width="0.8"/><rect x="520.55" y="502.05" width="6.5" height="6.5" fill="#d40c34" stroke="#b0a0a8" stroke-width="0.8"/><rect x="533.05" y="503.15" width="6.5" height="6.5" fill="#1c8cbc" stroke="#8aa8b8" stroke-width="0.8"/><rect x="542.55" y="497.05" width="6.5" height="6.5" fill="#1c8cbc" stroke="#8aa8b8" stroke-width="0.8"/><rect x="548.95" y="500.65" width="6.5" height="6.5" fill="#d40c34" stroke="#b0a0a8" stroke-width="0.8"/><rect x="544.75" y="504.95" width="6.5" height="6.5" fill="#0808bc" stroke="#8a8ad8" stroke-width="0.8"/><rect x="553.95" y="503.45" width="6.5" height="6.5" fill="#1c8cbc" stroke="#8aa8b8" stroke-width="0.8"/><rect x="519.15" y="514.85" width="6.5" height="6.5" fill="#1c8cbc" stroke="#8aa8b8" stroke-width="0.8"/><rect x="517.95" y="527.65" width="6.5" height="6.5" fill="#0808bc" stroke="#8a8ad8" stroke-width="0.8"/><rect x="517.75" y="533.05" width="6.5" height="6.5" fill="#d40c34" stroke="#b0a0a8" stroke-width="0.8"/><rect x="524.85" y="532.25" width="6.5" height="6.5" fill="#1c8cbc" stroke="#8aa8b8" stroke-width="0.8"/><rect x="531.65" y="532.25" width="6.5" height="6.5" fill="#0808bc" stroke="#8a8ad8" stroke-width="0.8"/><rect x="536.15" y="529.75" width="6.5" height="6.5" fill="#1c8cbc" stroke="#8aa8b8" stroke-width="0.8"/><rect x="553.95" y="533.35" width="6.5" height="6.5" fill="#0808bc" stroke="#8a8ad8" stroke-width="0.8"/><rect x="554.65" y="527.65" width="6.5" height="6.5" fill="#1c8cbc" stroke="#8aa8b8" stroke-width="0.8"/><rect x="555.35" y="521.95" width="6.5" height="6.5" fill="#1c8cbc" stroke="#8aa8b8" stroke-width="0.8"/><rect x="566.05" y="526.25" width="6.5" height="6.5" fill="#1c8cbc" stroke="#8aa8b8" stroke-width="0.8"/><rect x="575.95" y="527.65" width="6.5" height="6.5" fill="#1c8cbc" stroke="#8aa8b8" stroke-width="0.8"/><rect x="421.75" y="501.75" width="6.5" height="6.5" fill="#d40c34" stroke="#b0a0a8" stroke-width="0.8"/><rect x="430.95" y="500.65" width="6.5" height="6.5" fill="#1c8cbc" stroke="#8aa8b8" stroke-width="0.8"/><rect x="438.75" y="500.65" width="6.5" height="6.5" fill="#1c8cbc" stroke="#8aa8b8" stroke-width="0.8"/><rect x="438.05" y="506.35" width="6.5" height="6.5" fill="#1c8cbc" stroke="#8aa8b8" stroke-width="0.8"/><rect x="429.55" y="507.75" width="6.5" height="6.5" fill="#1c8cbc" stroke="#8aa8b8" stroke-width="0.8"/><rect x="434.55" y="507.05" width="6.5" height="6.5" fill="#1c8cbc" stroke="#8aa8b8" stroke-width="0.8"/><rect x="424.55" y="507.05" width="6.5" height="6.5" fill="#1c8cbc" stroke="#8aa8b8" stroke-width="0.8"/><rect x="435.25" y="514.55" width="6.5" height="6.5" fill="#1c8cbc" stroke="#8aa8b8" stroke-width="0.8"/><rect x="424.55" y="521.95" width="6.5" height="6.5" fill="#0808bc" stroke="#8a8ad8" stroke-width="0.8"/><rect x="425.95" y="528.35" width="6.5" height="6.5" fill="#1c8cbc" stroke="#8aa8b8" stroke-width="0.8"/><rect x="431.65" y="529.05" width="6.5" height="6.5" fill="#1c8cbc" stroke="#8aa8b8" stroke-width="0.8"/><rect x="435.95" y="535.45" width="6.5" height="6.5" fill="#0808bc" stroke="#8a8ad8" stroke-width="0.8"/><rect x="418.15" y="519.15" width="6.5" height="6.5" fill="#0808bc" stroke="#8a8ad8" stroke-width="0.8"/><rect x="360.75" y="502.15" width="6.5" height="6.5" fill="#1c8cbc" stroke="#8aa8b8" stroke-width="0.8"/><rect x="366.75" y="503.25" width="6.5" height="6.5" fill="#1c8cbc" stroke="#8aa8b8" stroke-width="0.8"/><rect x="382.05" y="506.95" width="6.5" height="6.5" fill="#0808bc" stroke="#8a8ad8" stroke-width="0.8"/><rect x="387.15" y="503.75" width="6.5" height="6.5" fill="#1c8cbc" stroke="#8aa8b8" stroke-width="0.8"/><rect x="394.35" y="507.75" width="6.5" height="6.5" fill="#1c8cbc" stroke="#8aa8b8" stroke-width="0.8"/><rect x="398.35" y="509.35" width="6.5" height="6.5" fill="#0808bc" stroke="#8a8ad8" stroke-width="0.8"/><rect x="439.15" y="503.75" width="6.5" height="6.5" fill="#1c8cbc" stroke="#8aa8b8" stroke-width="0.8"/><rect x="406.35" y="514.15" width="6.5" height="6.5" fill="#1c8cbc" stroke="#8aa8b8" stroke-width="0.8"/><rect x="411.95" y="514.95" width="6.5" height="6.5" fill="#1c8cbc" stroke="#8aa8b8" stroke-width="0.8"/><rect x="415.15" y="519.25" width="6.5" height="6.5" fill="#0808bc" stroke="#8a8ad8" stroke-width="0.8"/><rect x="435.15" y="538.15" width="6.5" height="6.5" fill="#0808bc" stroke="#8a8ad8" stroke-width="0.8"/><rect x="443.95" y="548.55" width="6.5" height="6.5" fill="#1c8cbc" stroke="#8aa8b8" stroke-width="0.8"/><rect x="452.75" y="560.55" width="6.5" height="6.5" fill="#0808bc" stroke="#8a8ad8" stroke-width="0.8"/><rect x="447.15" y="562.15" width="6.5" height="6.5" fill="#1c8cbc" stroke="#8aa8b8" stroke-width="0.8"/><rect x="443.95" y="565.35" width="6.5" height="6.5" fill="#0808bc" stroke="#8a8ad8" stroke-width="0.8"/><rect x="459.15" y="570.15" width="6.5" height="6.5" fill="#1c8cbc" stroke="#8aa8b8" stroke-width="0.8"/><rect x="455.15" y="538.95" width="6.5" height="6.5" fill="#1c8cbc" stroke="#8aa8b8" stroke-width="0.8"/><rect x="458.35" y="543.75" width="6.5" height="6.5" fill="#0808bc" stroke="#8a8ad8" stroke-width="0.8"/><rect x="465.55" y="554.15" width="6.5" height="6.5" fill="#1c8cbc" stroke="#8aa8b8" stroke-width="0.8"/><rect x="472.75" y="564.55" width="6.5" height="6.5" fill="#0808bc" stroke="#8a8ad8" stroke-width="0.8"/><rect x="481.25" y="576.25" width="6.5" height="6.5" fill="#1c8cbc" stroke="#8aa8b8" stroke-width="0.8"/><rect x="488.75" y="587.75" width="6.5" height="6.5" fill="#0808bc" stroke="#8a8ad8" stroke-width="0.8"/><rect x="499.15" y="602.15" width="6.5" height="6.5" fill="#1c8cbc" stroke="#8aa8b8" stroke-width="0.8"/><rect x="507.95" y="614.95" width="6.5" height="6.5" fill="#0808bc" stroke="#8a8ad8" stroke-width="0.8"/><rect x="471.95" y="587.75" width="6.5" height="6.5" fill="#1c8cbc" stroke="#8aa8b8" stroke-width="0.8"/><rect x="478.35" y="597.35" width="6.5" height="6.5" fill="#1c8cbc" stroke="#8aa8b8" stroke-width="0.8"/><rect x="489.25" y="600.55" width="6.5" height="6.5" fill="#0808bc" stroke="#8a8ad8" stroke-width="0.8"/><rect x="491.15" y="614.95" width="6.5" height="6.5" fill="#d40c34" stroke="#b0a0a8" stroke-width="0.8"/><rect x="455.95" y="578.95" width="6.5" height="6.5" fill="#1c8cbc" stroke="#8aa8b8" stroke-width="0.8"/><rect x="461.55" y="578.95" width="6.5" height="6.5" fill="#1c8cbc" stroke="#8aa8b8" stroke-width="0.8"/><rect x="466.75" y="579.45" width="6.5" height="6.5" fill="#0808bc" stroke="#8a8ad8" stroke-width="0.8"/><rect x="452.75" y="582.15" width="6.5" height="6.5" fill="#1c8cbc" stroke="#8aa8b8" stroke-width="0.8"/><rect x="448.75" y="586.95" width="6.5" height="6.5" fill="#1c8cbc" stroke="#8aa8b8" stroke-width="0.8"/><rect x="447.15" y="590.95" width="6.5" height="6.5" fill="#0808bc" stroke="#8a8ad8" stroke-width="0.8"/><rect x="441.55" y="592.55" width="6.5" height="6.5" fill="#0808bc" stroke="#8a8ad8" stroke-width="0.8"/><rect x="435.95" y="594.15" width="6.5" height="6.5" fill="#0808bc" stroke="#8a8ad8" stroke-width="0.8"/><rect x="444.75" y="602.95" width="6.5" height="6.5" fill="#1c8cbc" stroke="#8aa8b8" stroke-width="0.8"/><rect x="439.65" y="603.45" width="6.5" height="6.5" fill="#1c8cbc" stroke="#8aa8b8" stroke-width="0.8"/><rect x="434.35" y="603.75" width="6.5" height="6.5" fill="#1c8cbc" stroke="#8aa8b8" stroke-width="0.8"/><rect x="435.15" y="613.35" width="6.5" height="6.5" fill="#1c8cbc" stroke="#8aa8b8" stroke-width="0.8"/><rect x="443.15" y="614.95" width="6.5" height="6.5" fill="#1c8cbc" stroke="#8aa8b8" stroke-width="0.8"/><rect x="431.95" y="613.35" width="6.5" height="6.5" fill="#0808bc" stroke="#8a8ad8" stroke-width="0.8"/><rect x="422.05" y="591.75" width="6.5" height="6.5" fill="#1c8cbc" stroke="#8aa8b8" stroke-width="0.8"/><rect x="425.25" y="589.05" width="6.5" height="6.5" fill="#1c8cbc" stroke="#8aa8b8" stroke-width="0.8"/><rect x="408.25" y="586.15" width="6.5" height="6.5" fill="#d40c34" stroke="#b0a0a8" stroke-width="0.8"/><rect x="404.45" y="588.55" width="6.5" height="6.5" fill="#0808bc" stroke="#8a8ad8" stroke-width="0.8"/><rect x="406.35" y="578.15" width="6.5" height="6.5" fill="#1c8cbc" stroke="#8aa8b8" stroke-width="0.8"/><rect x="407.95" y="568.25" width="6.5" height="6.5" fill="#0808bc" stroke="#8a8ad8" stroke-width="0.8"/><rect x="426.35" y="566.65" width="6.5" height="6.5" fill="#1c8cbc" stroke="#8aa8b8" stroke-width="0.8"/><rect x="398.05" y="562.15" width="6.5" height="6.5" fill="#1c8cbc" stroke="#8aa8b8" stroke-width="0.8"/><rect x="392.75" y="583.75" width="6.5" height="6.5" fill="#1c8cbc" stroke="#8aa8b8" stroke-width="0.8"/><rect x="377.25" y="599.25" width="6.5" height="6.5" fill="#1c8cbc" stroke="#8aa8b8" stroke-width="0.8"/><rect x="375.95" y="607.25" width="6.5" height="6.5" fill="#1c8cbc" stroke="#8aa8b8" stroke-width="0.8"/><rect x="374.65" y="615.25" width="6.5" height="6.5" fill="#d40c34" stroke="#b0a0a8" stroke-width="0.8"/><rect x="398.35" y="615.25" width="6.5" height="6.5" fill="#d40c34" stroke="#b0a0a8" stroke-width="0.8"/><rect x="403.45" y="615.25" width="6.5" height="6.5" fill="#d40c34" stroke="#b0a0a8" stroke-width="0.8"/><rect x="403.95" y="608.55" width="6.5" height="6.5" fill="#1c8cbc" stroke="#8aa8b8" stroke-width="0.8"/><rect x="406.05" y="598.65" width="6.5" height="6.5" fill="#1c8cbc" stroke="#8aa8b8" stroke-width="0.8"/><rect x="413.25" y="610.15" width="6.5" height="6.5" fill="#1c8cbc" stroke="#8aa8b8" stroke-width="0.8"/><rect x="422.05" y="612.05" width="6.5" height="6.5" fill="#1c8cbc" stroke="#8aa8b8" stroke-width="0.8"/><rect x="494.05" y="538.15" width="6.5" height="6.5" fill="#0808bc" stroke="#8a8ad8" stroke-width="0.8"/><rect x="470.05" y="610.95" width="6.5" height="6.5" fill="#0808bc" stroke="#8a8ad8" stroke-width="0.8"/><rect x="572.05" y="570.75" width="6.5" height="6.5" fill="#0808bc" stroke="#8a8ad8" stroke-width="0.8"/><rect x="570.05" y="591.45" width="6.5" height="6.5" fill="#d40c34" stroke="#b0a0a8" stroke-width="0.8"/><rect x="592.35" y="586.75" width="6.5" height="6.5" fill="#1c8cbc" stroke="#8aa8b8" stroke-width="0.8"/><rect x="591.55" y="594.45" width="6.5" height="6.5" fill="#1c8cbc" stroke="#8aa8b8" stroke-width="0.8"/><rect x="585.35" y="595.65" width="6.5" height="6.5" fill="#1c8cbc" stroke="#8aa8b8" stroke-width="0.8"/><rect x="580.45" y="589.75" width="6.5" height="6.5" fill="#1c8cbc" stroke="#8aa8b8" stroke-width="0.8"/><rect x="575.55" y="588.55" width="6.5" height="6.5" fill="#1c8cbc" stroke="#8aa8b8" stroke-width="0.8"/><rect x="569.35" y="601.25" width="6.5" height="6.5" fill="#1c8cbc" stroke="#8aa8b8" stroke-width="0.8"/><rect x="588.65" y="601.55" width="6.5" height="6.5" fill="#1c8cbc" stroke="#8aa8b8" stroke-width="0.8"/><rect x="580.05" y="598.65" width="6.5" height="6.5" fill="#0808bc" stroke="#8a8ad8" stroke-width="0.8"/><rect x="580.05" y="605.25" width="6.5" height="6.5" fill="#1c8cbc" stroke="#8aa8b8" stroke-width="0.8"/><rect x="583.85" y="601.55" width="6.5" height="6.5" fill="#0808bc" stroke="#8a8ad8" stroke-width="0.8"/><rect x="592.75" y="602.35" width="6.5" height="6.5" fill="#0808bc" stroke="#8a8ad8" stroke-width="0.8"/><rect x="568.65" y="612.65" width="6.5" height="6.5" fill="#1c8cbc" stroke="#8aa8b8" stroke-width="0.8"/><rect x="574.55" y="614.15" width="6.5" height="6.5" fill="#1c8cbc" stroke="#8aa8b8" stroke-width="0.8"/><rect x="579.75" y="613.45" width="6.5" height="6.5" fill="#1c8cbc" stroke="#8aa8b8" stroke-width="0.8"/><rect x="584.85" y="613.75" width="6.5" height="6.5" fill="#0808bc" stroke="#8a8ad8" stroke-width="0.8"/><rect x="594.85" y="614.85" width="6.5" height="6.5" fill="#1c8cbc" stroke="#8aa8b8" stroke-width="0.8"/><rect x="605.15" y="615.65" width="6.5" height="6.5" fill="#d40c34" stroke="#b0a0a8" stroke-width="0.8"/><rect x="553.35" y="602.75" width="6.5" height="6.5" fill="#0808bc" stroke="#8a8ad8" stroke-width="0.8"/><circle cx="613.1" cy="640.7" r="39.4" fill="url(#ring2)"/><path d="M612.8 640.4V663.5l5.3-5 3.8 8.6 3.4-1.5-3.7-8.4h7.5z" fill="#fff" stroke="#fff" stroke-width="3.4" stroke-linejoin="round"/><path d="M612.8 640.4V663.5l5.3-5 3.8 8.6 3.4-1.5-3.7-8.4h7.5z" fill="#fff" stroke="#000" stroke-width="1.3" stroke-linejoin="round"/></svg></div><div id="rpanel" class="a"></div><svg style="left:0;top:0" width="1500" height="844"><defs><linearGradient id="lbg" x1="0" y1="0" x2="0" y2="1"><stop offset="0" stop-color="#f6f6f6"/><stop offset="1" stop-color="#e6e6e6"/></linearGradient><linearGradient id="fbg" x1="0" y1="0" x2="0" y2="1"><stop offset="0" stop-color="#f4f4f4"/><stop offset="1" stop-color="#e4e4e4"/></linearGradient></defs><circle cx="1164" cy="133" r="7" fill="#6c6c6c"/><path d="M1161 130l6 6M1167 130l-6 6" stroke="#fff" stroke-width="1.8"/><circle cx="1182" cy="133" r="7" fill="#6c6c6c"/><rect x="1180.5" y="129" width="5.5" height="4.5" fill="none" stroke="#fff" stroke-width="1.1"/><rect x="1178" y="131.8" width="5.5" height="4.5" fill="#6c6c6c" stroke="#fff" stroke-width="1.1"/><text x="1322" y="138" font-family="Liberation Sans" font-size="12" text-anchor="middle" fill="#222">Layerliste</text><rect x="1155.5" y="145.5" width="299" height="25" fill="url(#lbg)" stroke="#b4b4b4" stroke-width="1"/><rect x="1214.5" y="146" width="2" height="24.5" fill="#c4c4c4"/><rect x="1274.5" y="146" width="2" height="24.5" fill="#c4c4c4"/><rect x="1334.5" y="146" width="2" height="24.5" fill="#c4c4c4"/><rect x="1394.5" y="146" width="2" height="24.5" fill="#c4c4c4"/><rect x="1155" y="170" width="300" height="2" fill="#a9a9a9"/><path d="M1177.5 158C1181 152 1189 152 1192.5 158C1189 164 1181 164 1177.5 158z" fill="#000"/><path d="M1180 158C1182 154.5 1188 154.5 1190 158C1188 161.5 1182 161.5 1180 158z" fill="#fff"/><circle cx="1185" cy="158" r="2.9" fill="#000"/><path d="M1183.8 156.8v1" stroke="#fff" stroke-width="0.9"/><path d="M1237.5 158C1241 152 1249 152 1252.5 158C1249 164 1241 164 1237.5 158z" fill="#b0b0b0"/><path d="M1240 158C1242 154.5 1248 154.5 1250 158C1248 161.5 1242 161.5 1240 158z" fill="#f0f0f0"/><circle cx="1245" cy="158" r="2.9" fill="#b0b0b0"/><path d="M1243.8 156.8v1" stroke="#f0f0f0" stroke-width="0.9"/><path d="M1305 152.5v11M1299.5 158h11" stroke="#e01010" stroke-width="2.6"/><path d="M1359.5 158h11" stroke="#e01010" stroke-width="2.6"/><path d="M1418 164l1.2-3.8 10.5-9.5 2.6 2.6-10.5 9.5z" fill="#e8a838" stroke="#9a6a10" stroke-width="0.6"/><path d="M1429.7 150.7l2.6 2.6 0.9-0.9-2.6-2.6z" fill="#d84040"/><rect x="1155.5" y="172" width="299" height="386" fill="#fff"/><rect x="1155" y="172" width="1" height="386" fill="#c8c8c8"/><rect x="1155" y="558" width="300" height="1" fill="#cfcfcf"/><rect x="1181.5" y="178.5" width="15" height="8.5" fill="#fff" stroke="#000" stroke-width="1.1"/><text x="1203" y="186.5" font-family="Liberation Sans" font-size="13" fill="#111">0</text><path d="M1414.5 182C1418 176 1426 176 1429.5 182C1426 188 1418 188 1414.5 182z" fill="#000"/><path d="M1417 182C1419 178.5 1425 178.5 1427 182C1425 185.5 1419 185.5 1417 182z" fill="#fff"/><circle cx="1422" cy="182" r="2.9" fill="#000"/><path d="M1420.8 180.8v1" stroke="#fff" stroke-width="0.9"/><path d="M1442 180.5V178.5A3 3 0 0 1 1448 178.5V180.5" fill="none" stroke="#bdbdbd" stroke-width="1.4"/><rect x="1440" y="180.5" width="10" height="8" rx="1" fill="#bdbdbd"/><rect x="1156" y="192" width="298.5" height="19.8" fill="#0b4ed8"/><rect x="1181" y="198" width="16" height="9" fill="#363e4c"/><text x="1203" y="206.3" font-family="Liberation Sans" font-size="13" fill="#fff">Kadasternummern</text><path d="M1394.5 208.5l1.2-3.8 10.5-9.5 2.6 2.6-10.5 9.5z" fill="#e8a838" stroke="#9a6a10" stroke-width="0.6"/><path d="M1406.2 195.2l2.6 2.6 0.9-0.9-2.6-2.6z" fill="#d84040"/><path d="M1414.5 202C1418 196 1426 196 1429.5 202C1426 208 1418 208 1414.5 202z" fill="#000"/><path d="M1417 202C1419 198.5 1425 198.5 1427 202C1425 205.5 1419 205.5 1417 202z" fill="#0b4ed8"/><circle cx="1422" cy="202" r="2.9" fill="#000"/><path d="M1420.8 200.8v1" stroke="#0b4ed8" stroke-width="0.9"/><path d="M1442 200.5V198.5A3 3 0 0 1 1448 198.5V200.5" fill="none" stroke="#bcbcbc" stroke-width="1.4"/><rect x="1440" y="200.5" width="10" height="8" rx="1" fill="#bcbcbc"/><rect x="1181" y="218" width="16" height="9" fill="#000"/><text x="1203" y="226.3" font-family="Liberation Sans" font-size="13" fill="#111">Text</text><path d="M1414.5 222C1418 216 1426 216 1429.5 222C1426 228 1418 228 1414.5 222z" fill="#000"/><path d="M1417 222C1419 218.5 1425 218.5 1427 222C1425 225.5 1419 225.5 1417 222z" fill="#fff"/><circle cx="1422" cy="222" r="2.9" fill="#000"/><path d="M1420.8 220.8v1" stroke="#fff" stroke-width="0.9"/><path d="M1442 220.5V218.5A3 3 0 0 1 1448 218.5V220.5" fill="none" stroke="#bdbdbd" stroke-width="1.4"/><rect x="1440" y="220.5" width="10" height="8" rx="1" fill="#bdbdbd"/><circle cx="1164" cy="569.5" r="7" fill="#6c6c6c"/><path d="M1161 566.5l6 6M1167 566.5l-6 6" stroke="#fff" stroke-width="1.8"/><circle cx="1182" cy="569.5" r="7" fill="#6c6c6c"/><rect x="1180.5" y="565.5" width="5.5" height="4.5" fill="none" stroke="#fff" stroke-width="1.1"/><rect x="1178" y="568.3" width="5.5" height="4.5" fill="#6c6c6c" stroke="#fff" stroke-width="1.1"/><text x="1322" y="574" font-family="Liberation Sans" font-size="12" text-anchor="middle" fill="#222">Selektionsfilter</text><rect x="1155" y="579.5" width="300" height="1.5" fill="#cfcfcf"/><rect x="1167" y="594" width="276" height="136" fill="#e6e6e6" stroke="#dadada" stroke-width="1"/><text x="1174" y="595.5" font-family="Liberation Sans" font-size="12" fill="#222">Filter</text><rect x="1167.5" y="745.5" width="275" height="25.5" fill="url(#fbg)" stroke="#a8a8a8" stroke-width="1"/><rect x="1235.5" y="746" width="1" height="25" fill="#a8a8a8"/><rect x="1304.5" y="746" width="1" height="25" fill="#a8a8a8"/><rect x="1373.5" y="746" width="1" height="25" fill="#a8a8a8"/><rect x="1194.5" y="751.5" width="12" height="12" fill="#f88" stroke="#c44" stroke-width="0.7" stroke-dasharray="1 1"/><rect x="1263" y="750" width="10" height="10" fill="#f88" stroke="#a55" stroke-width="0.8"/><rect x="1266" y="753" width="10" height="10" fill="#f88" stroke="#944" stroke-width="0.7" stroke-dasharray="1 1"/><rect x="1332" y="750" width="10" height="10" fill="#f88" stroke="#a55" stroke-width="0.8"/><rect x="1335" y="753" width="10" height="10" fill="#fff" stroke="#666" stroke-width="0.7" stroke-dasharray="1 1"/><rect x="1335" y="753" width="7" height="7" fill="#fff"/><rect x="1401" y="750" width="10" height="10" fill="#fff" stroke="#777" stroke-width="0.8"/><rect x="1404" y="753" width="10" height="10" fill="none" stroke="#666" stroke-width="0.7" stroke-dasharray="1 1"/><rect x="1404" y="753" width="7" height="7" fill="#f88"/></svg>
<div class="lbl" style="top:618px">Objekttyp:</div>
<div class="lbl" style="top:644px">Eigenschaft:</div>
<div class="lbl" style="top:670px">Vergleich:</div>
<div class="lbl" style="top:696px">Wert:</div>
<div class="combo" style="top:614px">Text [4]<div class="arr"><svg width="16" height="16" style="left:0;top:0"><path d="M5 6.5L8 3.5L11 6.5M5 9.5L8 12.5L11 9.5" fill="none" stroke="#fff" stroke-width="1.3"/></svg></div></div>
<div class="combo" style="top:640px">Farbe<div class="arr"><svg width="16" height="16" style="left:0;top:0"><path d="M5 6.5L8 3.5L11 6.5M5 9.5L8 12.5L11 9.5" fill="none" stroke="#fff" stroke-width="1.3"/></svg></div></div>
<div class="combo" style="top:666px">= (ist)<div class="arr"><svg width="16" height="16" style="left:0;top:0"><path d="M5 6.5L8 3.5L11 6.5M5 9.5L8 12.5L11 9.5" fill="none" stroke="#fff" stroke-width="1.3"/></svg></div></div>
<div class="combo" style="top:692px;padding-left:25px">Gelb<div class="arr"><svg width="16" height="16" style="left:0;top:0"><path d="M5 6.5L8 3.5L11 6.5M5 9.5L8 12.5L11 9.5" fill="none" stroke="#fff" stroke-width="1.3"/></svg></div><div style="position:absolute;left:3px;top:4px;width:16px;height:11px;background:#ffef00;border:1px solid #333"></div></div>
<div id="rdock" class="a"></div><div id="status" class="a"></div>
<div class="st" style="left:2px;top:806px">247.9506,120.2396</div>
<div class="st" style="left:2px;top:826px">@247.9506,120.2396</div>
<div class="a" style="left:253px;top:802px;width:1px;height:39px;background:#8a8a8a"></div>
<div class="st" style="left:256px;top:806px">275.5668&lt;26°</div>
<div class="st" style="left:256px;top:826px">@275.5668&lt;26°</div>
<div class="st" style="left:500px;top:810px;width:200px;text-align:right">Element oder Bereich selektieren</div>
<div class="st" style="left:500px;top:821px;width:200px;text-align:right">Element oder Referenzpunkt verschieben</div>
<div class="st" style="left:949px;top:810px">Selektierte Objekte:</div>
<div class="st" style="left:949px;top:821px">140 Objekte auf 3 Layer.</div>
<svg style="left:0;top:0" width="1500" height="844">
<circle cx="509" cy="821.5" r="2.5" fill="#c4c4c4"/><circle cx="943" cy="822" r="2.5" fill="#c4c4c4"/><circle cx="1272.5" cy="822" r="2.5" fill="#c4c4c4"/>
<path d="M718.5 814C718.5 808 721 806 727 806S735.5 808 735.5 814V828C735.5 834 733 836 727 836S718.5 834 718.5 828Z" fill="#fff" stroke="#333" stroke-width="1"/>
<path d="M718.5 818H735.5M727 806V818" stroke="#333" stroke-width="0.9"/>
</svg><svg style="left:0;top:0" width="1500" height="844"><rect x="1455" y="122" width="1.2" height="677" fill="#f6f6f6"/><rect x="1498.3" y="122" width="1.7" height="677" fill="#b6b6b6"/><path d="M1462 131.5h1.5M1468 131.5h1.5M1474 131.5h1.5M1480 131.5h1.5M1486 131.5h1.5" stroke="#999" stroke-width="2"/><rect x="1456" y="135" width="48" height="42.5" rx="6" fill="#b8b8b8"/><rect x="1456" y="330" width="48" height="42.5" rx="6" fill="#b8b8b8"/><rect x="1456" y="432.5" width="48" height="43.0" rx="6" fill="#b8b8b8"/><path d="M1457 276.5H1500" stroke="#777" stroke-width="1" stroke-dasharray="1 2.5"/><path d="M1457 425.5H1500" stroke="#777" stroke-width="1" stroke-dasharray="1 2.5"/><path d="M1457 528H1500" stroke="#777" stroke-width="1" stroke-dasharray="1 2.5"/><rect x="1463.5" y="142.5" width="27" height="27" fill="#fff" stroke="#222" stroke-width="1"/><rect x="1463.5" y="142.5" width="27" height="5" fill="#000"/><rect x="1465" y="143.5" width="3" height="3" fill="#fff"/><path d="M1470 160l6-9h6l-6 9z" fill="#888" stroke="#333" stroke-width="0.7"/><path d="M1473 162l6-9h6l-6 9z" fill="#fff" stroke="#333" stroke-width="0.7"/><path d="M1476 160l4-5v5z" fill="none" stroke="#e33" stroke-width="0.9"/><rect x="1463.5" y="189.5" width="27" height="27" fill="#fff" stroke="#222" stroke-width="1"/><rect x="1463.5" y="189.5" width="27" height="5" fill="#000"/><rect x="1465" y="190.5" width="3" height="3" fill="#fff"/><rect x="1469" y="198" width="10" height="8" fill="#fdf0c0" stroke="#444" stroke-width="0.7"/><circle cx="1479" cy="207" r="4.5" fill="#fdf0c0" stroke="#444" stroke-width="0.7"/><rect x="1463.5" y="235.5" width="27" height="27" fill="#fff" stroke="#222" stroke-width="1"/><rect x="1463.5" y="235.5" width="27" height="5" fill="#000"/><rect x="1465" y="236.5" width="3" height="3" fill="#fff"/><rect x="1469" y="244" width="16" height="12" rx="2" fill="#eef2f8" stroke="#aac" stroke-width="0.7"/><rect x="1463.5" y="291.5" width="27" height="27" fill="#fff" stroke="#222" stroke-width="1"/><rect x="1463.5" y="291.5" width="27" height="5" fill="#000"/><rect x="1465" y="292.5" width="3" height="3" fill="#fff"/><path d="M1468 300h3v3h-3zM1468 305h3v3h-3zM1468 310h3v3h-3z" fill="#000"/><path d="M1473 300.5h14v2.5h-14zM1473 305.5h14v2.5h-14zM1473 310.5h14v2.5h-14z" fill="none" stroke="#333" stroke-width="0.7"/><rect x="1463.5" y="337.5" width="27" height="27" fill="#fff" stroke="#222" stroke-width="1"/><rect x="1463.5" y="337.5" width="27" height="5" fill="#000"/><rect x="1465" y="338.5" width="3" height="3" fill="#fff"/><path d="M1471 346h12l-4.5 5v8l-3-2v-6z" fill="#aaa" stroke="#333" stroke-width="0.7"/><rect x="1463.5" y="384.5" width="27" height="27" fill="#fff" stroke="#222" stroke-width="1"/><rect x="1463.5" y="384.5" width="27" height="5" fill="#000"/><rect x="1465" y="385.5" width="3" height="3" fill="#fff"/><path d="M1470 392l5 3h9v8h-9l-5 3z" fill="#eee" stroke="#333" stroke-width="0.7"/><path d="M1468 399h18" stroke="#e99" stroke-width="0.5"/><rect x="1463.5" y="440.5" width="27" height="27" fill="#fff" stroke="#222" stroke-width="1"/><rect x="1463.5" y="440.5" width="27" height="5" fill="#000"/><rect x="1465" y="441.5" width="3" height="3" fill="#fff"/><path d="M1467 451h10M1467 454h10M1467 457h10M1467 460h10" stroke="#888" stroke-width="0.6"/><rect x="1464.5" y="462.5" width="25" height="4" fill="#fff" stroke="#333" stroke-width="0.6"/><rect x="1463.5" y="487.5" width="27" height="27" fill="#fff" stroke="#222" stroke-width="1"/><rect x="1463.5" y="487.5" width="27" height="5" fill="#000"/><rect x="1465" y="488.5" width="3" height="3" fill="#fff"/><rect x="1470" y="495" width="14" height="16" rx="1" fill="#c89040" stroke="#8a6020" stroke-width="0.6"/><rect x="1472" y="497" width="10" height="12" fill="#fff"/><path d="M1465.5 549h7q3.5 0 3.5 3.5v1q0 3-3 3h-4M1469 556.5h4q3.5 0 3.5 3.5v2q0 3.5-3.5 3.5h-7.5M1479.5 549h3.5q6.5 0 6.5 6.5v4q0 6.5-6.5 6.5h-3.5z" fill="none" stroke="#111" stroke-width="1.6"/></svg></body></html>
